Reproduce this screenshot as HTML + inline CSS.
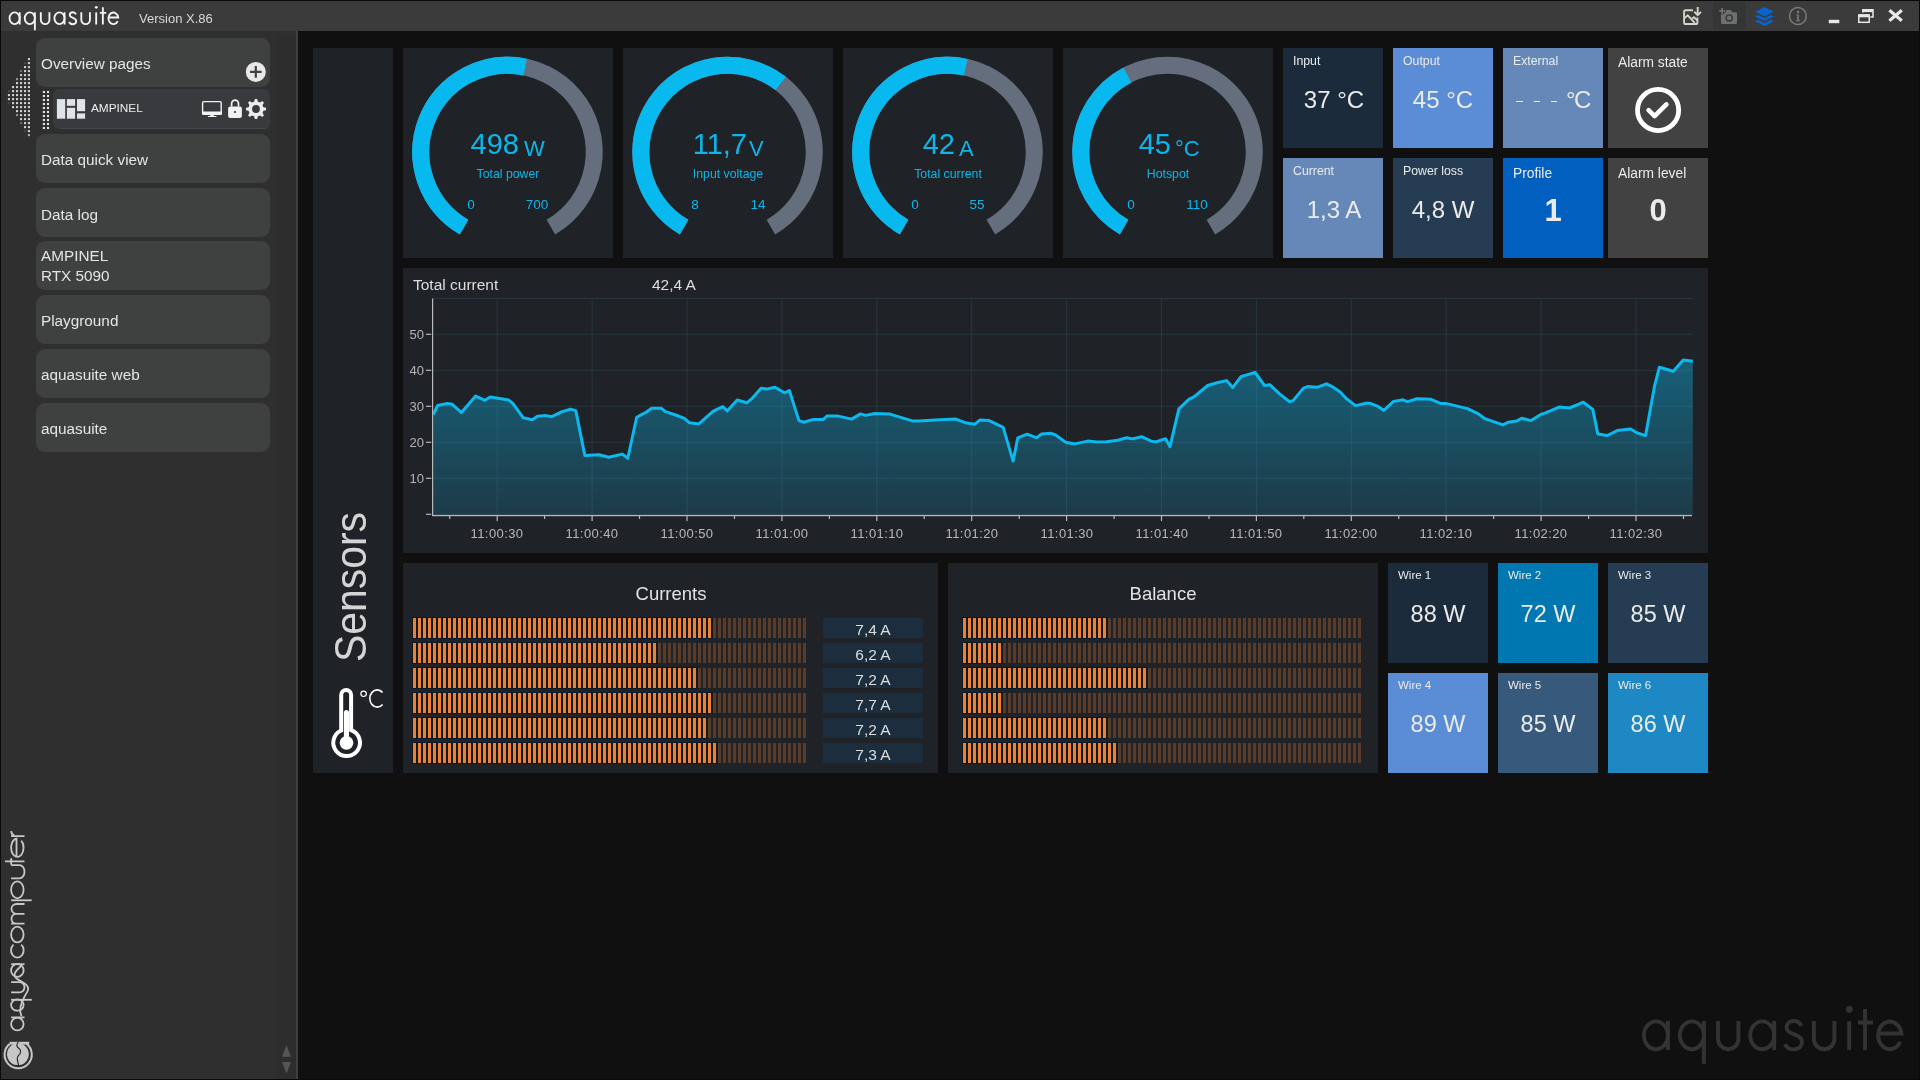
<!DOCTYPE html><html><head><meta charset="utf-8"><style>
*{margin:0;padding:0;box-sizing:border-box}
html,body{width:1920px;height:1080px;overflow:hidden;background:#101010;font-family:"Liberation Sans",sans-serif}
.a{position:absolute}
.t{position:absolute;white-space:nowrap;will-change:transform}
svg{position:absolute;overflow:visible;will-change:transform}
</style></head><body>
<div class="a" style="left:0px;top:0px;width:1920px;height:1080px;background:#0a0a0a;"></div>
<div class="a" style="left:1px;top:1px;width:1918px;height:1078px;background:#101010;"></div>
<div class="a" style="left:1px;top:1px;width:1918px;height:30px;background:#3b3b3b;"></div>
<div class="a" style="left:1px;top:31px;width:295px;height:1048px;background:#2f2f2f;"></div>
<div class="a" style="left:277px;top:35px;width:19px;height:1044px;background:#2d2d2d;"></div>
<div class="a" style="left:296px;top:31px;width:2px;height:1048px;background:#3e3e3e;"></div>
<svg style="left:0;top:0" width="1920" height="1080"><g transform="translate(8.75 24.5) scale(0.422)" fill="none" stroke="#f4f4f4" stroke-width="4.4"><ellipse cx="13.9" cy="-14.7" rx="12" ry="13.9"/><path d="M25.9 -29V0"/><ellipse cx="49.9" cy="-14.7" rx="12" ry="13.9"/><path d="M61.9 -29V13.8"/><path d="M76 -29V-11A10.2 10.2 0 0 0 96.4 -11V-29"/><ellipse cx="120.2" cy="-14.7" rx="12" ry="13.9"/><path d="M132.2 -29V0"/><path transform="translate(100 0)" d="M59.3 -24.2C58 -27.2 55 -29 51.8 -29C47.6 -29 44.6 -26.3 44.6 -22.6C44.6 -19 47.5 -17.6 51 -16.2C55.6 -14.4 59.9 -12.8 59.9 -8C59.9 -3.2 56.3 -0.6 51.8 -0.6C47.6 -0.6 44.6 -2.5 42.8 -5.8"/><path d="M171.9 -29V-11A10.25 10.25 0 0 0 192.4 -11V-29"/><path d="M207.2 -28.7V0"/><circle cx="207.4" cy="-40.6" r="3.3" style="stroke:none" fill="#f4f4f4"/><path d="M223 -40.9V0M216 -27.5H231"/><path d="M236.2 -16.5H259.4A11.65 13.8 0 1 0 258.2 -8.2"/></g></svg>
<div class="t" style="left:139.00px;top:12.00px;font-size:13px;line-height:13px;color:#d8d8d8;">Version X.86</div>
<svg style="left:0;top:0" width="1920" height="32">
<g fill="none" stroke="#d6d3c8" stroke-width="1.9">
<path d="M1693 10.3H1685.6Q1684.1 10.3 1684.1 11.8V22.4Q1684.1 24 1685.6 24H1695.9Q1697.4 24 1697.4 22.4V17.4"/>
<path d="M1684.2 18.4L1687.7 15.4L1694.8 22.8M1692.2 18.6L1694 17.2L1697.6 20.6"/>
<path d="M1697.7 7V14.6M1694.3 11.8L1697.7 15.1L1701 11.8"/>
</g>
<rect x="1713.2" y="1.6" width="32.4" height="28.3" rx="3" fill="#343536"/>
<path fill="#6f6f6b" d="M1721 13.4Q1721 12.2 1722.2 12.2H1725.4L1726.4 10H1731L1732 12.2H1735.8Q1737 12.2 1737 13.4V22.7Q1737 23.9 1735.8 23.9H1722.2Q1721 23.9 1721 22.7Z"/>
<circle cx="1729.2" cy="17.9" r="3.1" fill="none" stroke="#343536" stroke-width="1.3"/>
<path d="M1722.1 7.6V14.2M1718.8 10.9H1725.4" stroke="#343536" stroke-width="3.8"/>
<path d="M1722.1 8V13.8M1719.2 10.9H1725" stroke="#6f6f6b" stroke-width="1.8"/>
<g fill="#0964cc">
<path d="M1764.5 6.9L1773.9 11.7L1764.5 16.5L1755.2 11.7Z"/>
<path d="M1755.2 16.4L1758.1 14.9L1764.5 18.1L1770.9 14.9L1773.9 16.4L1764.5 21.1Z"/>
<path d="M1755.2 21.3L1758.1 19.8L1764.5 23L1770.9 19.8L1773.9 21.3L1764.5 26Z"/>
</g>
<circle cx="1797.9" cy="16" r="8.4" fill="none" stroke="#7a7a7a" stroke-width="1.5"/>
<circle cx="1798.1" cy="12" r="1.2" fill="#7a7a7a"/>
<path d="M1796.4 14.4H1798.9V20.2H1800V21.2H1796V20.2H1797.2V15.4H1796.4Z" fill="#7a7a7a"/>
<rect x="1828.8" y="19.8" width="10.5" height="3.4" fill="#e8e8e8"/>
<g fill="none" stroke="#e8e8e8">
<path d="M1862.8 12.4V9.8H1873V17H1870.4" stroke-width="1.5"/>
<path d="M1862.8 10.6H1873" stroke-width="3"/>
<rect x="1858.8" y="15" width="10.4" height="7.3" stroke-width="1.5"/>
<path d="M1858.8 15.8H1869.2" stroke-width="3"/>
<path d="M1889.4 10.2L1901.8 20.8M1901.8 10.2L1889.4 20.8" stroke-width="3.2"/>
</g>
</svg>
<svg style="left:0;top:0" width="1920" height="1080"><g transform="translate(1642 1050) scale(1.0)" fill="none" stroke="#333333" stroke-width="3.9"><ellipse cx="13.9" cy="-14.7" rx="12" ry="13.9"/><path d="M25.9 -29V0"/><ellipse cx="49.9" cy="-14.7" rx="12" ry="13.9"/><path d="M61.9 -29V13.8"/><path d="M76 -29V-11A10.2 10.2 0 0 0 96.4 -11V-29"/><ellipse cx="120.2" cy="-14.7" rx="12" ry="13.9"/><path d="M132.2 -29V0"/><path transform="translate(100 0)" d="M59.3 -24.2C58 -27.2 55 -29 51.8 -29C47.6 -29 44.6 -26.3 44.6 -22.6C44.6 -19 47.5 -17.6 51 -16.2C55.6 -14.4 59.9 -12.8 59.9 -8C59.9 -3.2 56.3 -0.6 51.8 -0.6C47.6 -0.6 44.6 -2.5 42.8 -5.8"/><path d="M171.9 -29V-11A10.25 10.25 0 0 0 192.4 -11V-29"/><path d="M207.2 -28.7V0"/><circle cx="207.4" cy="-40.6" r="3.3" style="stroke:none" fill="#333333"/><path d="M223 -40.9V0M216 -27.5H231"/><path d="M236.2 -16.5H259.4A11.65 13.8 0 1 0 258.2 -8.2"/></g></svg>
<div class="a" style="left:36px;top:38px;width:234px;height:49px;background:#3f4141;border-radius:9px"></div>
<div class="a" style="left:36px;top:134px;width:234px;height:49px;background:#3f4141;border-radius:9px"></div>
<div class="a" style="left:36px;top:188px;width:234px;height:49px;background:#3f4141;border-radius:9px"></div>
<div class="a" style="left:36px;top:241px;width:234px;height:49px;background:#3f4141;border-radius:9px"></div>
<div class="a" style="left:36px;top:295px;width:234px;height:49px;background:#3f4141;border-radius:9px"></div>
<div class="a" style="left:36px;top:349px;width:234px;height:49px;background:#3f4141;border-radius:9px"></div>
<div class="a" style="left:36px;top:403px;width:234px;height:49px;background:#3f4141;border-radius:9px"></div>
<div class="t" style="left:41.40px;top:55.85px;font-size:15.3px;line-height:15.3px;color:#e4e4e4;">Overview pages</div>
<div class="t" style="left:41.40px;top:152.25px;font-size:15.3px;line-height:15.3px;color:#e4e4e4;">Data quick view</div>
<div class="t" style="left:41.40px;top:206.55px;font-size:15.3px;line-height:15.3px;color:#e4e4e4;">Data log</div>
<div class="t" style="left:41.40px;top:248.15px;font-size:15.3px;line-height:15.3px;color:#e4e4e4;">AMPINEL</div>
<div class="t" style="left:41.40px;top:267.75px;font-size:15.3px;line-height:15.3px;color:#e4e4e4;">RTX 5090</div>
<div class="t" style="left:41.40px;top:312.65px;font-size:15.3px;line-height:15.3px;color:#e4e4e4;">Playground</div>
<div class="t" style="left:41.40px;top:366.65px;font-size:15.3px;line-height:15.3px;color:#e4e4e4;">aquasuite web</div>
<div class="t" style="left:41.40px;top:420.85px;font-size:15.3px;line-height:15.3px;color:#e4e4e4;">aquasuite</div>
<div class="a" style="left:53px;top:89px;width:217px;height:40px;background:#393a3e;border-radius:6px"></div>
<div class="a" style="left:61px;top:128px;width:205px;height:1px;background:#44474d;"></div>
<div class="t" style="left:91.00px;top:103.11px;font-size:11.8px;line-height:11.8px;color:#ececec;">AMPINEL</div>
<svg style="left:0;top:0" width="300" height="1080"><circle cx="255.8" cy="71.9" r="10" fill="#e8e8e8"/><path d="M250 71.9H261.6M255.8 66.1V77.7" stroke="#3f4141" stroke-width="2.2"/><g fill="#e0e3e7"><rect x="56.9" y="99.1" width="8.3" height="19.6"/><rect x="66.9" y="99.1" width="8.2" height="6.7"/><rect x="66.9" y="107.8" width="8.2" height="10.9"/><rect x="77" y="99.1" width="8.1" height="12.1"/><rect x="77" y="113.4" width="8.1" height="5.3"/></g><rect x="202.6" y="101.6" width="18.6" height="12.6" rx="1.2" fill="none" stroke="#f2f2f2" stroke-width="1.4"/><rect x="202" y="111.4" width="20" height="3.4" rx="1" fill="#f2f2f2"/><path d="M210.3 114.6H213.8V116.1H216.4V117.1H207.9V116.1H210.3Z" fill="#f2f2f2"/><path d="M231.6 106.6V103.6A3.45 3.45 0 0 1 238.5 103.6V106.6" fill="none" stroke="#f2f2f2" stroke-width="1.7"/><rect x="228.1" y="106.4" width="13.8" height="11.7" rx="2" fill="#f2f2f2"/><circle cx="235" cy="112" r="1.1" fill="#393a3e"/><polygon points="254.21,101.82 254.77,98.98 257.23,98.98 257.79,101.82 259.81,102.66 262.22,101.04 263.96,102.78 262.34,105.19 263.18,107.21 266.02,107.77 266.02,110.23 263.18,110.79 262.34,112.81 263.96,115.22 262.22,116.96 259.81,115.34 257.79,116.18 257.23,119.02 254.77,119.02 254.21,116.18 252.19,115.34 249.78,116.96 248.04,115.22 249.66,112.81 248.82,110.79 245.98,110.23 245.98,107.77 248.82,107.21 249.66,105.19 248.04,102.78 249.78,101.04 252.19,102.66" fill="#ececec"/><circle cx="256" cy="109" r="7.6" fill="#ececec"/><circle cx="256" cy="109" r="3.9" fill="#393a3e"/><rect x="27.90" y="58.05" width="2.1" height="2.1" fill="#cfcfcf" opacity="1.00"/><rect x="27.90" y="62.05" width="2.1" height="2.1" fill="#cfcfcf" opacity="1.00"/><rect x="27.90" y="66.05" width="2.1" height="2.1" fill="#cfcfcf" opacity="1.00"/><rect x="27.90" y="70.05" width="2.1" height="2.1" fill="#cfcfcf" opacity="1.00"/><rect x="27.90" y="74.05" width="2.1" height="2.1" fill="#cfcfcf" opacity="1.00"/><rect x="27.90" y="78.05" width="2.1" height="2.1" fill="#cfcfcf" opacity="1.00"/><rect x="27.90" y="82.05" width="2.1" height="2.1" fill="#cfcfcf" opacity="1.00"/><rect x="27.90" y="86.05" width="2.1" height="2.1" fill="#cfcfcf" opacity="1.00"/><rect x="27.90" y="90.05" width="2.1" height="2.1" fill="#cfcfcf" opacity="1.00"/><rect x="27.90" y="94.05" width="2.1" height="2.1" fill="#cfcfcf" opacity="1.00"/><rect x="27.90" y="98.05" width="2.1" height="2.1" fill="#cfcfcf" opacity="1.00"/><rect x="27.90" y="102.05" width="2.1" height="2.1" fill="#cfcfcf" opacity="1.00"/><rect x="27.90" y="106.05" width="2.1" height="2.1" fill="#cfcfcf" opacity="1.00"/><rect x="27.90" y="110.05" width="2.1" height="2.1" fill="#cfcfcf" opacity="1.00"/><rect x="27.90" y="114.05" width="2.1" height="2.1" fill="#cfcfcf" opacity="1.00"/><rect x="27.90" y="118.05" width="2.1" height="2.1" fill="#cfcfcf" opacity="1.00"/><rect x="27.90" y="122.05" width="2.1" height="2.1" fill="#cfcfcf" opacity="1.00"/><rect x="27.90" y="126.05" width="2.1" height="2.1" fill="#cfcfcf" opacity="1.00"/><rect x="27.90" y="130.05" width="2.1" height="2.1" fill="#cfcfcf" opacity="1.00"/><rect x="27.90" y="134.05" width="2.1" height="2.1" fill="#cfcfcf" opacity="0.78"/><rect x="24.00" y="62.05" width="2.1" height="2.1" fill="#cfcfcf" opacity="0.17"/><rect x="24.00" y="66.05" width="2.1" height="2.1" fill="#cfcfcf" opacity="1.00"/><rect x="24.00" y="70.05" width="2.1" height="2.1" fill="#cfcfcf" opacity="1.00"/><rect x="24.00" y="74.05" width="2.1" height="2.1" fill="#cfcfcf" opacity="1.00"/><rect x="24.00" y="78.05" width="2.1" height="2.1" fill="#cfcfcf" opacity="1.00"/><rect x="24.00" y="82.05" width="2.1" height="2.1" fill="#cfcfcf" opacity="1.00"/><rect x="24.00" y="86.05" width="2.1" height="2.1" fill="#cfcfcf" opacity="1.00"/><rect x="24.00" y="90.05" width="2.1" height="2.1" fill="#cfcfcf" opacity="1.00"/><rect x="24.00" y="94.05" width="2.1" height="2.1" fill="#cfcfcf" opacity="1.00"/><rect x="24.00" y="98.05" width="2.1" height="2.1" fill="#cfcfcf" opacity="1.00"/><rect x="24.00" y="102.05" width="2.1" height="2.1" fill="#cfcfcf" opacity="1.00"/><rect x="24.00" y="106.05" width="2.1" height="2.1" fill="#cfcfcf" opacity="1.00"/><rect x="24.00" y="110.05" width="2.1" height="2.1" fill="#cfcfcf" opacity="1.00"/><rect x="24.00" y="114.05" width="2.1" height="2.1" fill="#cfcfcf" opacity="1.00"/><rect x="24.00" y="118.05" width="2.1" height="2.1" fill="#cfcfcf" opacity="1.00"/><rect x="24.00" y="122.05" width="2.1" height="2.1" fill="#cfcfcf" opacity="1.00"/><rect x="24.00" y="126.05" width="2.1" height="2.1" fill="#cfcfcf" opacity="1.00"/><rect x="24.00" y="130.05" width="2.1" height="2.1" fill="#cfcfcf" opacity="0.14"/><rect x="20.00" y="70.05" width="2.1" height="2.1" fill="#cfcfcf" opacity="0.40"/><rect x="20.00" y="74.05" width="2.1" height="2.1" fill="#cfcfcf" opacity="1.00"/><rect x="20.00" y="78.05" width="2.1" height="2.1" fill="#cfcfcf" opacity="1.00"/><rect x="20.00" y="82.05" width="2.1" height="2.1" fill="#cfcfcf" opacity="1.00"/><rect x="20.00" y="86.05" width="2.1" height="2.1" fill="#cfcfcf" opacity="1.00"/><rect x="20.00" y="90.05" width="2.1" height="2.1" fill="#cfcfcf" opacity="1.00"/><rect x="20.00" y="94.05" width="2.1" height="2.1" fill="#cfcfcf" opacity="1.00"/><rect x="20.00" y="98.05" width="2.1" height="2.1" fill="#cfcfcf" opacity="1.00"/><rect x="20.00" y="102.05" width="2.1" height="2.1" fill="#cfcfcf" opacity="1.00"/><rect x="20.00" y="106.05" width="2.1" height="2.1" fill="#cfcfcf" opacity="1.00"/><rect x="20.00" y="110.05" width="2.1" height="2.1" fill="#cfcfcf" opacity="1.00"/><rect x="20.00" y="114.05" width="2.1" height="2.1" fill="#cfcfcf" opacity="1.00"/><rect x="20.00" y="118.05" width="2.1" height="2.1" fill="#cfcfcf" opacity="1.00"/><rect x="20.00" y="122.05" width="2.1" height="2.1" fill="#cfcfcf" opacity="0.38"/><rect x="16.00" y="78.05" width="2.1" height="2.1" fill="#cfcfcf" opacity="0.64"/><rect x="16.00" y="82.05" width="2.1" height="2.1" fill="#cfcfcf" opacity="1.00"/><rect x="16.00" y="86.05" width="2.1" height="2.1" fill="#cfcfcf" opacity="1.00"/><rect x="16.00" y="90.05" width="2.1" height="2.1" fill="#cfcfcf" opacity="1.00"/><rect x="16.00" y="94.05" width="2.1" height="2.1" fill="#cfcfcf" opacity="1.00"/><rect x="16.00" y="98.05" width="2.1" height="2.1" fill="#cfcfcf" opacity="1.00"/><rect x="16.00" y="102.05" width="2.1" height="2.1" fill="#cfcfcf" opacity="1.00"/><rect x="16.00" y="106.05" width="2.1" height="2.1" fill="#cfcfcf" opacity="1.00"/><rect x="16.00" y="110.05" width="2.1" height="2.1" fill="#cfcfcf" opacity="1.00"/><rect x="16.00" y="114.05" width="2.1" height="2.1" fill="#cfcfcf" opacity="0.62"/><rect x="12.00" y="86.05" width="2.1" height="2.1" fill="#cfcfcf" opacity="1.00"/><rect x="12.00" y="90.05" width="2.1" height="2.1" fill="#cfcfcf" opacity="1.00"/><rect x="12.00" y="94.05" width="2.1" height="2.1" fill="#cfcfcf" opacity="1.00"/><rect x="12.00" y="98.05" width="2.1" height="2.1" fill="#cfcfcf" opacity="1.00"/><rect x="12.00" y="102.05" width="2.1" height="2.1" fill="#cfcfcf" opacity="1.00"/><rect x="12.00" y="106.05" width="2.1" height="2.1" fill="#cfcfcf" opacity="1.00"/><rect x="7.90" y="90.05" width="2.1" height="2.1" fill="#cfcfcf" opacity="0.17"/><rect x="7.90" y="94.05" width="2.1" height="2.1" fill="#cfcfcf" opacity="1.00"/><rect x="7.90" y="98.05" width="2.1" height="2.1" fill="#cfcfcf" opacity="1.00"/><rect x="7.90" y="102.05" width="2.1" height="2.1" fill="#cfcfcf" opacity="0.14"/><rect x="42.85" y="90.95" width="2.1" height="2.1" fill="#e6e6e6"/><rect x="46.95" y="90.95" width="2.1" height="2.1" fill="#e6e6e6"/><rect x="42.85" y="94.95" width="2.1" height="2.1" fill="#e6e6e6"/><rect x="46.95" y="94.95" width="2.1" height="2.1" fill="#e6e6e6"/><rect x="42.85" y="98.95" width="2.1" height="2.1" fill="#e6e6e6"/><rect x="46.95" y="98.95" width="2.1" height="2.1" fill="#e6e6e6"/><rect x="42.85" y="102.95" width="2.1" height="2.1" fill="#e6e6e6"/><rect x="46.95" y="102.95" width="2.1" height="2.1" fill="#e6e6e6"/><rect x="42.85" y="106.95" width="2.1" height="2.1" fill="#e6e6e6"/><rect x="46.95" y="106.95" width="2.1" height="2.1" fill="#e6e6e6"/><rect x="42.85" y="110.95" width="2.1" height="2.1" fill="#e6e6e6"/><rect x="46.95" y="110.95" width="2.1" height="2.1" fill="#e6e6e6"/><rect x="42.85" y="114.95" width="2.1" height="2.1" fill="#e6e6e6"/><rect x="46.95" y="114.95" width="2.1" height="2.1" fill="#e6e6e6"/><rect x="42.85" y="118.95" width="2.1" height="2.1" fill="#e6e6e6"/><rect x="46.95" y="118.95" width="2.1" height="2.1" fill="#e6e6e6"/><rect x="42.85" y="122.95" width="2.1" height="2.1" fill="#e6e6e6"/><rect x="46.95" y="122.95" width="2.1" height="2.1" fill="#e6e6e6"/><rect x="42.85" y="126.95" width="2.1" height="2.1" fill="#e6e6e6"/><rect x="46.95" y="126.95" width="2.1" height="2.1" fill="#e6e6e6"/><path d="M286.5 1045L291 1056.7H282Z M282 1061.9H291L286.5 1073.5Z" fill="#555555"/><g><path d="M26.57 1043.88A13.6 13.6 0 1 1 9.83 1043.88" fill="none" stroke="#c6c6c6" stroke-width="2"/><circle cx="17.9" cy="1054.2" r="10.9" fill="#c6c6c6"/><rect x="9.7" y="1041.8" width="19.5" height="2.8" fill="#c6c6c6"/><path d="M18.6 1041.5C16 1045 16.5 1046.5 19 1048.5C21.5 1050.5 21 1053.5 18.5 1055.5C16 1057.5 17.5 1061.5 18.8 1066" fill="none" stroke="#2f2f2f" stroke-width="1.2"/></g></svg>
<svg style="left:0;top:0" width="300" height="1080"><g transform="translate(24.5 1031.2) rotate(-90)" fill="none" stroke="#c8c8c8" stroke-width="1.8"><ellipse cx="7.15" cy="-7.15" rx="6.35" ry="6.25"/><path d="M13.8 -13.4V0"/><ellipse cx="26.15" cy="-7.15" rx="5.65" ry="6.25"/><path d="M31.4 -13.4V7.3"/><path d="M38.8 -13.4V-5A5.1 5 0 0 0 49 -5V-13.4"/><ellipse cx="60.8" cy="-7.15" rx="6.5" ry="6.25"/><path d="M67 -13.4V0"/><path d="M86.5 -11A7.2 6.3 0 1 0 86.5 -3.3"/><ellipse cx="96.65" cy="-7.15" rx="7.85" ry="6.25"/><path d="M107.6 0V-13.4M107.6 -8A4.9 5 0 0 1 117.4 -8V0M117.4 -8A4.9 5 0 0 1 127.2 -8V0"/><ellipse cx="141.4" cy="-7.15" rx="8.5" ry="6.25"/><path d="M130.9 -13.4V7.2"/><path d="M152.9 -13.4V-5A6.6 5 0 0 0 166.1 -5V-13.4"/><path d="M169.8 -19.5V0M166.5 -13.3H173"/><path d="M174.3 -8H192.6A9.15 6.25 0 1 0 190.6 -3.2"/><path d="M195.1 0V-13.4M195.1 -10A6 6 0 0 1 200 -13.4"/><path d="M15 -3C22 -6 28 -3 33.5 -0.5S42 6 46 2C50 -2 52 -10 56 -10S62 -6 66 -3"/></g></svg>
<div class="a" style="left:313px;top:48px;width:80px;height:725px;background:#1f2327;"></div>
<div class="a" style="left:403px;top:48px;width:210px;height:210px;background:#1f2327;"></div>
<div class="a" style="left:623px;top:48px;width:210px;height:210px;background:#1f2327;"></div>
<div class="a" style="left:843px;top:48px;width:210px;height:210px;background:#1f2327;"></div>
<div class="a" style="left:1063px;top:48px;width:210px;height:210px;background:#1f2327;"></div>
<div class="a" style="left:403px;top:268px;width:1305px;height:285px;background:#1f2327;"></div>
<div class="a" style="left:403px;top:563px;width:535px;height:210px;background:#1f2327;"></div>
<div class="a" style="left:948px;top:563px;width:430px;height:210px;background:#1f2327;"></div>
<svg style="left:0;top:0" width="1920" height="300"><path d="M464.12 227.13A86.75 86.75 0 1 1 550.88 227.13" fill="none" stroke="#646e7d" stroke-width="17"/><path d="M464.12 227.13A86.75 86.75 0 0 1 525.24 67.08" fill="none" stroke="#08b9ef" stroke-width="17"/><path d="M684.12 227.13A86.75 86.75 0 1 1 770.88 227.13" fill="none" stroke="#646e7d" stroke-width="17"/><path d="M684.12 227.13A86.75 86.75 0 1 1 780.67 83.45" fill="none" stroke="#08b9ef" stroke-width="17"/><path d="M904.12 227.13A86.75 86.75 0 1 1 990.88 227.13" fill="none" stroke="#646e7d" stroke-width="17"/><path d="M904.12 227.13A86.75 86.75 0 0 1 965.83 67.21" fill="none" stroke="#08b9ef" stroke-width="17"/><path d="M1124.12 227.13A86.75 86.75 0 1 1 1210.88 227.13" fill="none" stroke="#646e7d" stroke-width="17"/><path d="M1124.12 227.13A86.75 86.75 0 0 1 1127.44 75.05" fill="none" stroke="#08b9ef" stroke-width="17"/></svg>
<div class="t" style="left:398.60px;width:120px;text-align:right;top:130.45px;font-size:29px;line-height:29px;color:#0cb6ea;">498</div>
<div class="t" style="left:523.70px;top:138.38px;font-size:22px;line-height:22px;color:#0cb6ea;">W</div>
<div class="t" style="left:428.20px;width:160px;text-align:center;top:167.59px;font-size:12.3px;line-height:12.3px;color:#0cb6ea;">Total power</div>
<div class="t" style="left:440.50px;width:60px;text-align:center;top:197.57px;font-size:13.5px;line-height:13.5px;color:#0cb6ea;">0</div>
<div class="t" style="left:507.00px;width:60px;text-align:center;top:197.57px;font-size:13.5px;line-height:13.5px;color:#0cb6ea;">700</div>
<div class="t" style="left:626.60px;width:120px;text-align:right;top:130.45px;font-size:29px;line-height:29px;color:#0cb6ea;">11,7</div>
<div class="t" style="left:748.80px;top:138.38px;font-size:22px;line-height:22px;color:#0cb6ea;">V</div>
<div class="t" style="left:648.20px;width:160px;text-align:center;top:167.59px;font-size:12.3px;line-height:12.3px;color:#0cb6ea;">Input voltage</div>
<div class="t" style="left:664.50px;width:60px;text-align:center;top:197.57px;font-size:13.5px;line-height:13.5px;color:#0cb6ea;">8</div>
<div class="t" style="left:727.50px;width:60px;text-align:center;top:197.57px;font-size:13.5px;line-height:13.5px;color:#0cb6ea;">14</div>
<div class="t" style="left:835.40px;width:120px;text-align:right;top:130.45px;font-size:29px;line-height:29px;color:#0cb6ea;">42</div>
<div class="t" style="left:958.80px;top:138.38px;font-size:22px;line-height:22px;color:#0cb6ea;">A</div>
<div class="t" style="left:868.20px;width:160px;text-align:center;top:167.59px;font-size:12.3px;line-height:12.3px;color:#0cb6ea;">Total current</div>
<div class="t" style="left:884.50px;width:60px;text-align:center;top:197.57px;font-size:13.5px;line-height:13.5px;color:#0cb6ea;">0</div>
<div class="t" style="left:946.50px;width:60px;text-align:center;top:197.57px;font-size:13.5px;line-height:13.5px;color:#0cb6ea;">55</div>
<div class="t" style="left:1051.20px;width:120px;text-align:right;top:130.45px;font-size:29px;line-height:29px;color:#0cb6ea;">45</div>
<div class="t" style="left:1174.80px;top:138.38px;font-size:22px;line-height:22px;color:#0cb6ea;">°C</div>
<div class="t" style="left:1088.20px;width:160px;text-align:center;top:167.59px;font-size:12.3px;line-height:12.3px;color:#0cb6ea;">Hotspot</div>
<div class="t" style="left:1100.50px;width:60px;text-align:center;top:197.57px;font-size:13.5px;line-height:13.5px;color:#0cb6ea;">0</div>
<div class="t" style="left:1167.00px;width:60px;text-align:center;top:197.57px;font-size:13.5px;line-height:13.5px;color:#0cb6ea;">110</div>
<div class="a" style="left:1283px;top:48px;width:100px;height:100px;background:#1c2b3c;"></div>
<div class="a" style="left:1393px;top:48px;width:100px;height:100px;background:#5b8cd6;"></div>
<div class="a" style="left:1503px;top:48px;width:100px;height:100px;background:#6688b8;"></div>
<div class="a" style="left:1608px;top:48px;width:100px;height:100px;background:#424242;"></div>
<div class="a" style="left:1283px;top:158px;width:100px;height:100px;background:#6688b8;"></div>
<div class="a" style="left:1393px;top:158px;width:100px;height:100px;background:#253c52;"></div>
<div class="a" style="left:1503px;top:158px;width:100px;height:100px;background:#005fbf;"></div>
<div class="a" style="left:1608px;top:158px;width:100px;height:100px;background:#424242;"></div>
<div class="t" style="left:1293.00px;top:54.89px;font-size:12.3px;line-height:12.3px;color:#ebebeb;">Input</div>
<div class="t" style="left:1403.00px;top:54.89px;font-size:12.3px;line-height:12.3px;color:#ebebeb;">Output</div>
<div class="t" style="left:1513.00px;top:54.89px;font-size:12.3px;line-height:12.3px;color:#ebebeb;">External</div>
<div class="t" style="left:1618.00px;top:56.42px;font-size:13.8px;line-height:13.8px;color:#ebebeb;">Alarm state</div>
<div class="t" style="left:1293.00px;top:164.59px;font-size:12.3px;line-height:12.3px;color:#ebebeb;">Current</div>
<div class="t" style="left:1403.00px;top:164.59px;font-size:12.3px;line-height:12.3px;color:#ebebeb;">Power loss</div>
<div class="t" style="left:1513.00px;top:166.62px;font-size:13.8px;line-height:13.8px;color:#ebebeb;">Profile</div>
<div class="t" style="left:1618.00px;top:166.62px;font-size:13.8px;line-height:13.8px;color:#ebebeb;">Alarm level</div>
<div class="t" style="left:1283.50px;width:100px;text-align:center;top:87.68px;font-size:24px;line-height:24px;color:#ebebeb;">37 °C</div>
<div class="t" style="left:1392.80px;width:100px;text-align:center;top:87.68px;font-size:24px;line-height:24px;color:#ebebeb;">45 °C</div>
<div class="a" style="left:1516.4px;top:100.7px;width:6.7px;height:1.6px;background:#ebebeb;"></div>
<div class="a" style="left:1533.5px;top:100.7px;width:6.7px;height:1.6px;background:#ebebeb;"></div>
<div class="a" style="left:1550.5px;top:100.7px;width:6.7px;height:1.6px;background:#ebebeb;"></div>
<div class="t" style="left:1565.80px;top:87.68px;font-size:24px;line-height:24px;color:#ebebeb;letter-spacing:-1.5px">°C</div>
<div class="t" style="left:1284.25px;width:100px;text-align:center;top:197.68px;font-size:24px;line-height:24px;color:#ebebeb;">1,3 A</div>
<div class="t" style="left:1392.90px;width:100px;text-align:center;top:197.68px;font-size:24px;line-height:24px;color:#ebebeb;">4,8 W</div>
<div class="t" style="left:1503.20px;width:100px;text-align:center;top:195.36px;font-size:31px;line-height:31px;color:#ebebeb;font-weight:bold">1</div>
<div class="t" style="left:1607.90px;width:100px;text-align:center;top:195.36px;font-size:31px;line-height:31px;color:#ebebeb;font-weight:bold">0</div>
<svg style="left:0;top:0" width="1920" height="300"><circle cx="1658.1" cy="110" r="20.6" fill="none" stroke="#ffffff" stroke-width="4.8"/><path d="M1648.6 110.2L1654.6 116.1L1666.4 104.4" fill="none" stroke="#ffffff" stroke-width="4.6" stroke-linecap="round" stroke-linejoin="round"/></svg>
<div class="a" style="left:1388px;top:563px;width:100px;height:100px;background:#1c2b3c;"></div>
<div class="t" style="left:1398.00px;top:570.37px;font-size:11.5px;line-height:11.5px;color:#ebebeb;">Wire 1</div>
<div class="t" style="left:1387.80px;width:100px;text-align:center;top:603.21px;font-size:23.5px;line-height:23.5px;color:#ebebeb;">88 W</div>
<div class="a" style="left:1498px;top:563px;width:100px;height:100px;background:#0077b0;"></div>
<div class="t" style="left:1508.00px;top:570.37px;font-size:11.5px;line-height:11.5px;color:#ebebeb;">Wire 2</div>
<div class="t" style="left:1497.80px;width:100px;text-align:center;top:603.21px;font-size:23.5px;line-height:23.5px;color:#ebebeb;">72 W</div>
<div class="a" style="left:1608px;top:563px;width:100px;height:100px;background:#253c52;"></div>
<div class="t" style="left:1618.00px;top:570.37px;font-size:11.5px;line-height:11.5px;color:#ebebeb;">Wire 3</div>
<div class="t" style="left:1607.80px;width:100px;text-align:center;top:603.21px;font-size:23.5px;line-height:23.5px;color:#ebebeb;">85 W</div>
<div class="a" style="left:1388px;top:673px;width:100px;height:100px;background:#5b8cd6;"></div>
<div class="t" style="left:1398.00px;top:680.37px;font-size:11.5px;line-height:11.5px;color:#ebebeb;">Wire 4</div>
<div class="t" style="left:1387.80px;width:100px;text-align:center;top:713.21px;font-size:23.5px;line-height:23.5px;color:#ebebeb;">89 W</div>
<div class="a" style="left:1498px;top:673px;width:100px;height:100px;background:#375a7c;"></div>
<div class="t" style="left:1508.00px;top:680.37px;font-size:11.5px;line-height:11.5px;color:#ebebeb;">Wire 5</div>
<div class="t" style="left:1497.80px;width:100px;text-align:center;top:713.21px;font-size:23.5px;line-height:23.5px;color:#ebebeb;">85 W</div>
<div class="a" style="left:1608px;top:673px;width:100px;height:100px;background:#1e88c4;"></div>
<div class="t" style="left:1618.00px;top:680.37px;font-size:11.5px;line-height:11.5px;color:#ebebeb;">Wire 6</div>
<div class="t" style="left:1607.80px;width:100px;text-align:center;top:713.21px;font-size:23.5px;line-height:23.5px;color:#ebebeb;">86 W</div>
<svg style="left:0;top:0" width="400" height="800"><text transform="translate(366.3 662) rotate(-90)" font-family="Liberation Sans" font-size="44" fill="#d4d4d4" textLength="150" lengthAdjust="spacingAndGlyphs">Sensors</text><path d="M341.2 730.46V694.9A4.95 4.95 0 0 1 351.1 694.9V730.06A13.35 13.35 0 1 1 341.2 730.46Z" fill="none" stroke="#ffffff" stroke-width="4"/><rect x="343.9" y="709.9" width="5.1" height="30" rx="2.55" fill="#ffffff"/><circle cx="346.5" cy="742.8" r="6.85" fill="#ffffff"/><circle cx="363.6" cy="693.8" r="2.7" fill="none" stroke="#ffffff" stroke-width="1.2"/><path d="M382.6 692.6A7.4 8.6 0 1 0 382.6 704.4" fill="none" stroke="#ffffff" stroke-width="1.6"/></svg>
<svg style="left:0;top:0" width="1920" height="600"><defs><linearGradient id="fg" gradientUnits="userSpaceOnUse" x1="0" y1="360" x2="0" y2="515"><stop offset="0" stop-color="#176079"/><stop offset="1" stop-color="#1d3b48"/></linearGradient></defs><polygon points="433,515 433.2,414.5 437.7,405.5 447.4,403.5 452.0,404.2 461.4,412.6 475.7,396.1 485.0,400.3 490.2,397.0 498.0,398.3 508.4,399.9 512.9,403.5 523.3,417.8 532.3,419.7 537.5,416.2 546.0,415.6 551.8,416.7 561.5,411.9 570.6,409.3 575.8,410.6 584.8,455.4 599.1,454.7 608.8,457.3 622.4,454.1 627.8,458.3 636.7,417.2 646.1,412.2 651.7,408.3 661.1,408.3 665.6,411.7 675.6,415.0 684.4,418.3 689.4,422.8 698.9,423.9 713.3,411.1 722.8,406.7 727.2,410.9 737.2,400.0 746.7,402.8 752.2,398.3 761.1,388.3 766.7,389.1 775.0,387.2 784.4,392.8 789.4,390.6 798.9,420.6 803.9,422.2 813.3,419.4 823.0,419.6 827.2,415.9 837.1,415.9 851.7,419.1 860.5,413.9 865.7,415.4 875.1,413.5 889.2,413.9 913.1,421.1 919.4,421.1 935.0,420.1 955.8,419.1 965.2,422.7 974.6,424.3 979.8,420.1 989.2,420.6 1003.2,427.4 1013.1,461.1 1017.8,437.8 1027.2,434.2 1036.7,437.8 1041.7,433.9 1051.1,433.3 1055.6,435.0 1065.6,442.2 1075.0,443.9 1087.8,441.1 1096.7,442.0 1106.7,441.7 1117.8,440.2 1126.7,437.8 1132.2,438.9 1141.7,436.7 1151.1,441.1 1155.6,442.0 1165.6,438.7 1170.0,446.7 1178.9,408.9 1188.9,399.4 1193.9,396.9 1207.7,385.5 1217.1,382.7 1226.5,380.6 1232.7,387.6 1241.0,376.7 1244.2,375.6 1255.1,372.5 1264.5,385.5 1269.7,384.7 1279.6,393.9 1289.5,401.7 1293.1,400.6 1303.5,388.1 1307.7,386.6 1317.1,387.3 1326.5,383.8 1332.2,386.6 1340.5,392.3 1346.2,398.5 1355.6,405.6 1366.0,403.2 1369.7,403.2 1378.5,406.7 1383.9,410.4 1393.5,401.4 1402.9,399.8 1407.6,401.6 1417.0,398.8 1431.0,399.3 1440.4,403.4 1445.6,403.4 1467.5,408.6 1478.4,413.9 1484.2,418.3 1502.9,424.8 1508.6,422.2 1516.5,421.1 1521.7,418.3 1531.0,420.6 1540.9,414.4 1545.6,412.8 1559.7,406.9 1569.4,408.0 1578.3,404.4 1583.3,402.2 1592.8,409.4 1597.8,433.9 1607.2,435.6 1617.2,430.6 1630.6,428.9 1636.7,432.8 1645.6,435.6 1654.4,386.7 1659.4,367.2 1673.3,371.3 1683.3,360.0 1692.8,361.3 1692.8,515" fill="url(#fg)"/><rect x="433" y="477.8" width="1260" height="1" fill="rgba(100,170,210,0.14)"/><rect x="433" y="441.8" width="1260" height="1" fill="rgba(100,170,210,0.14)"/><rect x="433" y="405.8" width="1260" height="1" fill="rgba(100,170,210,0.14)"/><rect x="433" y="369.8" width="1260" height="1" fill="rgba(100,170,210,0.14)"/><rect x="433" y="333.8" width="1260" height="1" fill="rgba(100,170,210,0.14)"/><rect x="433" y="298" width="1260" height="1" fill="rgba(100,170,210,0.14)"/><rect x="496.7" y="299" width="1" height="215.5" fill="rgba(100,170,210,0.14)"/><rect x="591.6" y="299" width="1" height="215.5" fill="rgba(100,170,210,0.14)"/><rect x="686.5" y="299" width="1" height="215.5" fill="rgba(100,170,210,0.14)"/><rect x="781.4" y="299" width="1" height="215.5" fill="rgba(100,170,210,0.14)"/><rect x="876.3" y="299" width="1" height="215.5" fill="rgba(100,170,210,0.14)"/><rect x="971.2" y="299" width="1" height="215.5" fill="rgba(100,170,210,0.14)"/><rect x="1066.1" y="299" width="1" height="215.5" fill="rgba(100,170,210,0.14)"/><rect x="1161.0" y="299" width="1" height="215.5" fill="rgba(100,170,210,0.14)"/><rect x="1255.9" y="299" width="1" height="215.5" fill="rgba(100,170,210,0.14)"/><rect x="1350.8" y="299" width="1" height="215.5" fill="rgba(100,170,210,0.14)"/><rect x="1445.7" y="299" width="1" height="215.5" fill="rgba(100,170,210,0.14)"/><rect x="1540.6" y="299" width="1" height="215.5" fill="rgba(100,170,210,0.14)"/><rect x="1635.5" y="299" width="1" height="215.5" fill="rgba(100,170,210,0.14)"/><polyline points="433.2,414.5 437.7,405.5 447.4,403.5 452.0,404.2 461.4,412.6 475.7,396.1 485.0,400.3 490.2,397.0 498.0,398.3 508.4,399.9 512.9,403.5 523.3,417.8 532.3,419.7 537.5,416.2 546.0,415.6 551.8,416.7 561.5,411.9 570.6,409.3 575.8,410.6 584.8,455.4 599.1,454.7 608.8,457.3 622.4,454.1 627.8,458.3 636.7,417.2 646.1,412.2 651.7,408.3 661.1,408.3 665.6,411.7 675.6,415.0 684.4,418.3 689.4,422.8 698.9,423.9 713.3,411.1 722.8,406.7 727.2,410.9 737.2,400.0 746.7,402.8 752.2,398.3 761.1,388.3 766.7,389.1 775.0,387.2 784.4,392.8 789.4,390.6 798.9,420.6 803.9,422.2 813.3,419.4 823.0,419.6 827.2,415.9 837.1,415.9 851.7,419.1 860.5,413.9 865.7,415.4 875.1,413.5 889.2,413.9 913.1,421.1 919.4,421.1 935.0,420.1 955.8,419.1 965.2,422.7 974.6,424.3 979.8,420.1 989.2,420.6 1003.2,427.4 1013.1,461.1 1017.8,437.8 1027.2,434.2 1036.7,437.8 1041.7,433.9 1051.1,433.3 1055.6,435.0 1065.6,442.2 1075.0,443.9 1087.8,441.1 1096.7,442.0 1106.7,441.7 1117.8,440.2 1126.7,437.8 1132.2,438.9 1141.7,436.7 1151.1,441.1 1155.6,442.0 1165.6,438.7 1170.0,446.7 1178.9,408.9 1188.9,399.4 1193.9,396.9 1207.7,385.5 1217.1,382.7 1226.5,380.6 1232.7,387.6 1241.0,376.7 1244.2,375.6 1255.1,372.5 1264.5,385.5 1269.7,384.7 1279.6,393.9 1289.5,401.7 1293.1,400.6 1303.5,388.1 1307.7,386.6 1317.1,387.3 1326.5,383.8 1332.2,386.6 1340.5,392.3 1346.2,398.5 1355.6,405.6 1366.0,403.2 1369.7,403.2 1378.5,406.7 1383.9,410.4 1393.5,401.4 1402.9,399.8 1407.6,401.6 1417.0,398.8 1431.0,399.3 1440.4,403.4 1445.6,403.4 1467.5,408.6 1478.4,413.9 1484.2,418.3 1502.9,424.8 1508.6,422.2 1516.5,421.1 1521.7,418.3 1531.0,420.6 1540.9,414.4 1545.6,412.8 1559.7,406.9 1569.4,408.0 1578.3,404.4 1583.3,402.2 1592.8,409.4 1597.8,433.9 1607.2,435.6 1617.2,430.6 1630.6,428.9 1636.7,432.8 1645.6,435.6 1654.4,386.7 1659.4,367.2 1673.3,371.3 1683.3,360.0 1692.8,361.3" fill="none" stroke="#0bb9ef" stroke-width="3" stroke-linejoin="round"/><rect x="432" y="298.5" width="1.2" height="217" fill="#b9b9b9"/><rect x="432" y="514.9" width="1260" height="1.3" fill="#b9b9b9"/><rect x="426" y="513.7" width="5.2" height="1.2" fill="#b9b9b9"/><rect x="426" y="477.7" width="5.2" height="1.2" fill="#b9b9b9"/><rect x="426" y="441.7" width="5.2" height="1.2" fill="#b9b9b9"/><rect x="426" y="405.7" width="5.2" height="1.2" fill="#b9b9b9"/><rect x="426" y="369.7" width="5.2" height="1.2" fill="#b9b9b9"/><rect x="426" y="333.7" width="5.2" height="1.2" fill="#b9b9b9"/><rect x="496.6" y="516" width="1.2" height="5" fill="#b9b9b9"/><rect x="591.5" y="516" width="1.2" height="5" fill="#b9b9b9"/><rect x="686.4" y="516" width="1.2" height="5" fill="#b9b9b9"/><rect x="781.3" y="516" width="1.2" height="5" fill="#b9b9b9"/><rect x="876.2" y="516" width="1.2" height="5" fill="#b9b9b9"/><rect x="971.1" y="516" width="1.2" height="5" fill="#b9b9b9"/><rect x="1066.0" y="516" width="1.2" height="5" fill="#b9b9b9"/><rect x="1160.9" y="516" width="1.2" height="5" fill="#b9b9b9"/><rect x="1255.8" y="516" width="1.2" height="5" fill="#b9b9b9"/><rect x="1350.7" y="516" width="1.2" height="5" fill="#b9b9b9"/><rect x="1445.6" y="516" width="1.2" height="5" fill="#b9b9b9"/><rect x="1540.5" y="516" width="1.2" height="5" fill="#b9b9b9"/><rect x="1635.4" y="516" width="1.2" height="5" fill="#b9b9b9"/><rect x="449.1" y="516" width="1.2" height="3" fill="#b9b9b9"/><rect x="544.0" y="516" width="1.2" height="3" fill="#b9b9b9"/><rect x="638.9" y="516" width="1.2" height="3" fill="#b9b9b9"/><rect x="733.9" y="516" width="1.2" height="3" fill="#b9b9b9"/><rect x="828.8" y="516" width="1.2" height="3" fill="#b9b9b9"/><rect x="923.6" y="516" width="1.2" height="3" fill="#b9b9b9"/><rect x="1018.6" y="516" width="1.2" height="3" fill="#b9b9b9"/><rect x="1113.5" y="516" width="1.2" height="3" fill="#b9b9b9"/><rect x="1208.4" y="516" width="1.2" height="3" fill="#b9b9b9"/><rect x="1303.2" y="516" width="1.2" height="3" fill="#b9b9b9"/><rect x="1398.2" y="516" width="1.2" height="3" fill="#b9b9b9"/><rect x="1493.1" y="516" width="1.2" height="3" fill="#b9b9b9"/><rect x="1588.0" y="516" width="1.2" height="3" fill="#b9b9b9"/><rect x="1682.9" y="516" width="1.2" height="3" fill="#b9b9b9"/></svg>
<div class="t" style="left:413.40px;top:277.38px;font-size:15.5px;line-height:15.5px;color:#dedede;">Total current</div>
<div class="t" style="left:652.30px;top:277.38px;font-size:15.5px;line-height:15.5px;color:#dedede;">42,4 A</div>
<div class="t" style="left:384.30px;width:40px;text-align:right;top:471.50px;font-size:13px;line-height:13px;color:#b4b4b4;">10</div>
<div class="t" style="left:384.30px;width:40px;text-align:right;top:435.50px;font-size:13px;line-height:13px;color:#b4b4b4;">20</div>
<div class="t" style="left:384.30px;width:40px;text-align:right;top:399.50px;font-size:13px;line-height:13px;color:#b4b4b4;">30</div>
<div class="t" style="left:384.30px;width:40px;text-align:right;top:363.50px;font-size:13px;line-height:13px;color:#b4b4b4;">40</div>
<div class="t" style="left:384.30px;width:40px;text-align:right;top:327.50px;font-size:13px;line-height:13px;color:#b4b4b4;">50</div>
<div class="t" style="left:457.20px;width:80px;text-align:center;top:526.80px;font-size:13px;line-height:13px;color:#b8b8b8;letter-spacing:0.4px">11:00:30</div>
<div class="t" style="left:552.10px;width:80px;text-align:center;top:526.80px;font-size:13px;line-height:13px;color:#b8b8b8;letter-spacing:0.4px">11:00:40</div>
<div class="t" style="left:647.00px;width:80px;text-align:center;top:526.80px;font-size:13px;line-height:13px;color:#b8b8b8;letter-spacing:0.4px">11:00:50</div>
<div class="t" style="left:741.90px;width:80px;text-align:center;top:526.80px;font-size:13px;line-height:13px;color:#b8b8b8;letter-spacing:0.4px">11:01:00</div>
<div class="t" style="left:836.80px;width:80px;text-align:center;top:526.80px;font-size:13px;line-height:13px;color:#b8b8b8;letter-spacing:0.4px">11:01:10</div>
<div class="t" style="left:931.70px;width:80px;text-align:center;top:526.80px;font-size:13px;line-height:13px;color:#b8b8b8;letter-spacing:0.4px">11:01:20</div>
<div class="t" style="left:1026.60px;width:80px;text-align:center;top:526.80px;font-size:13px;line-height:13px;color:#b8b8b8;letter-spacing:0.4px">11:01:30</div>
<div class="t" style="left:1121.50px;width:80px;text-align:center;top:526.80px;font-size:13px;line-height:13px;color:#b8b8b8;letter-spacing:0.4px">11:01:40</div>
<div class="t" style="left:1216.40px;width:80px;text-align:center;top:526.80px;font-size:13px;line-height:13px;color:#b8b8b8;letter-spacing:0.4px">11:01:50</div>
<div class="t" style="left:1311.30px;width:80px;text-align:center;top:526.80px;font-size:13px;line-height:13px;color:#b8b8b8;letter-spacing:0.4px">11:02:00</div>
<div class="t" style="left:1406.20px;width:80px;text-align:center;top:526.80px;font-size:13px;line-height:13px;color:#b8b8b8;letter-spacing:0.4px">11:02:10</div>
<div class="t" style="left:1501.10px;width:80px;text-align:center;top:526.80px;font-size:13px;line-height:13px;color:#b8b8b8;letter-spacing:0.4px">11:02:20</div>
<div class="t" style="left:1596.00px;width:80px;text-align:center;top:526.80px;font-size:13px;line-height:13px;color:#b8b8b8;letter-spacing:0.4px">11:02:30</div>
<svg style="left:0;top:0" width="1920" height="800"><rect x="412" y="617" width="301" height="22" fill="#0c1a26"/><rect x="413" y="618" width="3" height="20" fill="#ee8034"/><rect x="418" y="618" width="3" height="20" fill="#ee8034"/><rect x="423" y="618" width="3" height="20" fill="#ee8034"/><rect x="428" y="618" width="3" height="20" fill="#ee8034"/><rect x="433" y="618" width="3" height="20" fill="#ee8034"/><rect x="438" y="618" width="3" height="20" fill="#ee8034"/><rect x="443" y="618" width="3" height="20" fill="#ee8034"/><rect x="448" y="618" width="3" height="20" fill="#ee8034"/><rect x="453" y="618" width="3" height="20" fill="#ee8034"/><rect x="458" y="618" width="3" height="20" fill="#ee8034"/><rect x="463" y="618" width="3" height="20" fill="#ee8034"/><rect x="468" y="618" width="3" height="20" fill="#ee8034"/><rect x="473" y="618" width="3" height="20" fill="#ee8034"/><rect x="478" y="618" width="3" height="20" fill="#ee8034"/><rect x="483" y="618" width="3" height="20" fill="#ee8034"/><rect x="488" y="618" width="3" height="20" fill="#ee8034"/><rect x="493" y="618" width="3" height="20" fill="#ee8034"/><rect x="498" y="618" width="3" height="20" fill="#ee8034"/><rect x="503" y="618" width="3" height="20" fill="#ee8034"/><rect x="508" y="618" width="3" height="20" fill="#ee8034"/><rect x="513" y="618" width="3" height="20" fill="#ee8034"/><rect x="518" y="618" width="3" height="20" fill="#ee8034"/><rect x="523" y="618" width="3" height="20" fill="#ee8034"/><rect x="528" y="618" width="3" height="20" fill="#ee8034"/><rect x="533" y="618" width="3" height="20" fill="#ee8034"/><rect x="538" y="618" width="3" height="20" fill="#ee8034"/><rect x="543" y="618" width="3" height="20" fill="#ee8034"/><rect x="548" y="618" width="3" height="20" fill="#ee8034"/><rect x="553" y="618" width="3" height="20" fill="#ee8034"/><rect x="558" y="618" width="3" height="20" fill="#ee8034"/><rect x="563" y="618" width="3" height="20" fill="#ee8034"/><rect x="568" y="618" width="3" height="20" fill="#ee8034"/><rect x="573" y="618" width="3" height="20" fill="#ee8034"/><rect x="578" y="618" width="3" height="20" fill="#ee8034"/><rect x="583" y="618" width="3" height="20" fill="#ee8034"/><rect x="588" y="618" width="3" height="20" fill="#ee8034"/><rect x="593" y="618" width="3" height="20" fill="#ee8034"/><rect x="598" y="618" width="3" height="20" fill="#ee8034"/><rect x="603" y="618" width="3" height="20" fill="#ee8034"/><rect x="608" y="618" width="3" height="20" fill="#ee8034"/><rect x="613" y="618" width="3" height="20" fill="#ee8034"/><rect x="618" y="618" width="3" height="20" fill="#ee8034"/><rect x="623" y="618" width="3" height="20" fill="#ee8034"/><rect x="628" y="618" width="3" height="20" fill="#ee8034"/><rect x="633" y="618" width="3" height="20" fill="#ee8034"/><rect x="638" y="618" width="3" height="20" fill="#ee8034"/><rect x="643" y="618" width="3" height="20" fill="#ee8034"/><rect x="648" y="618" width="3" height="20" fill="#ee8034"/><rect x="653" y="618" width="3" height="20" fill="#ee8034"/><rect x="658" y="618" width="3" height="20" fill="#ee8034"/><rect x="663" y="618" width="3" height="20" fill="#ee8034"/><rect x="668" y="618" width="3" height="20" fill="#ee8034"/><rect x="673" y="618" width="3" height="20" fill="#ee8034"/><rect x="678" y="618" width="3" height="20" fill="#ee8034"/><rect x="683" y="618" width="3" height="20" fill="#ee8034"/><rect x="688" y="618" width="3" height="20" fill="#ee8034"/><rect x="693" y="618" width="3" height="20" fill="#ee8034"/><rect x="698" y="618" width="3" height="20" fill="#ee8034"/><rect x="703" y="618" width="3" height="20" fill="#ee8034"/><rect x="708" y="618" width="3" height="20" fill="#ee8034"/><rect x="713" y="618" width="3" height="20" fill="#583b29"/><rect x="718" y="618" width="3" height="20" fill="#583b29"/><rect x="723" y="618" width="3" height="20" fill="#583b29"/><rect x="728" y="618" width="3" height="20" fill="#583b29"/><rect x="733" y="618" width="3" height="20" fill="#583b29"/><rect x="738" y="618" width="3" height="20" fill="#583b29"/><rect x="743" y="618" width="3" height="20" fill="#583b29"/><rect x="748" y="618" width="3" height="20" fill="#583b29"/><rect x="753" y="618" width="3" height="20" fill="#583b29"/><rect x="758" y="618" width="3" height="20" fill="#583b29"/><rect x="763" y="618" width="3" height="20" fill="#583b29"/><rect x="768" y="618" width="3" height="20" fill="#583b29"/><rect x="773" y="618" width="3" height="20" fill="#583b29"/><rect x="778" y="618" width="3" height="20" fill="#583b29"/><rect x="783" y="618" width="3" height="20" fill="#583b29"/><rect x="788" y="618" width="3" height="20" fill="#583b29"/><rect x="793" y="618" width="3" height="20" fill="#583b29"/><rect x="798" y="618" width="3" height="20" fill="#583b29"/><rect x="803" y="618" width="3" height="20" fill="#583b29"/><rect x="412" y="642" width="246" height="22" fill="#0c1a26"/><rect x="413" y="643" width="3" height="20" fill="#ee8034"/><rect x="418" y="643" width="3" height="20" fill="#ee8034"/><rect x="423" y="643" width="3" height="20" fill="#ee8034"/><rect x="428" y="643" width="3" height="20" fill="#ee8034"/><rect x="433" y="643" width="3" height="20" fill="#ee8034"/><rect x="438" y="643" width="3" height="20" fill="#ee8034"/><rect x="443" y="643" width="3" height="20" fill="#ee8034"/><rect x="448" y="643" width="3" height="20" fill="#ee8034"/><rect x="453" y="643" width="3" height="20" fill="#ee8034"/><rect x="458" y="643" width="3" height="20" fill="#ee8034"/><rect x="463" y="643" width="3" height="20" fill="#ee8034"/><rect x="468" y="643" width="3" height="20" fill="#ee8034"/><rect x="473" y="643" width="3" height="20" fill="#ee8034"/><rect x="478" y="643" width="3" height="20" fill="#ee8034"/><rect x="483" y="643" width="3" height="20" fill="#ee8034"/><rect x="488" y="643" width="3" height="20" fill="#ee8034"/><rect x="493" y="643" width="3" height="20" fill="#ee8034"/><rect x="498" y="643" width="3" height="20" fill="#ee8034"/><rect x="503" y="643" width="3" height="20" fill="#ee8034"/><rect x="508" y="643" width="3" height="20" fill="#ee8034"/><rect x="513" y="643" width="3" height="20" fill="#ee8034"/><rect x="518" y="643" width="3" height="20" fill="#ee8034"/><rect x="523" y="643" width="3" height="20" fill="#ee8034"/><rect x="528" y="643" width="3" height="20" fill="#ee8034"/><rect x="533" y="643" width="3" height="20" fill="#ee8034"/><rect x="538" y="643" width="3" height="20" fill="#ee8034"/><rect x="543" y="643" width="3" height="20" fill="#ee8034"/><rect x="548" y="643" width="3" height="20" fill="#ee8034"/><rect x="553" y="643" width="3" height="20" fill="#ee8034"/><rect x="558" y="643" width="3" height="20" fill="#ee8034"/><rect x="563" y="643" width="3" height="20" fill="#ee8034"/><rect x="568" y="643" width="3" height="20" fill="#ee8034"/><rect x="573" y="643" width="3" height="20" fill="#ee8034"/><rect x="578" y="643" width="3" height="20" fill="#ee8034"/><rect x="583" y="643" width="3" height="20" fill="#ee8034"/><rect x="588" y="643" width="3" height="20" fill="#ee8034"/><rect x="593" y="643" width="3" height="20" fill="#ee8034"/><rect x="598" y="643" width="3" height="20" fill="#ee8034"/><rect x="603" y="643" width="3" height="20" fill="#ee8034"/><rect x="608" y="643" width="3" height="20" fill="#ee8034"/><rect x="613" y="643" width="3" height="20" fill="#ee8034"/><rect x="618" y="643" width="3" height="20" fill="#ee8034"/><rect x="623" y="643" width="3" height="20" fill="#ee8034"/><rect x="628" y="643" width="3" height="20" fill="#ee8034"/><rect x="633" y="643" width="3" height="20" fill="#ee8034"/><rect x="638" y="643" width="3" height="20" fill="#ee8034"/><rect x="643" y="643" width="3" height="20" fill="#ee8034"/><rect x="648" y="643" width="3" height="20" fill="#ee8034"/><rect x="653" y="643" width="3" height="20" fill="#ee8034"/><rect x="658" y="643" width="3" height="20" fill="#583b29"/><rect x="663" y="643" width="3" height="20" fill="#583b29"/><rect x="668" y="643" width="3" height="20" fill="#583b29"/><rect x="673" y="643" width="3" height="20" fill="#583b29"/><rect x="678" y="643" width="3" height="20" fill="#583b29"/><rect x="683" y="643" width="3" height="20" fill="#583b29"/><rect x="688" y="643" width="3" height="20" fill="#583b29"/><rect x="693" y="643" width="3" height="20" fill="#583b29"/><rect x="698" y="643" width="3" height="20" fill="#583b29"/><rect x="703" y="643" width="3" height="20" fill="#583b29"/><rect x="708" y="643" width="3" height="20" fill="#583b29"/><rect x="713" y="643" width="3" height="20" fill="#583b29"/><rect x="718" y="643" width="3" height="20" fill="#583b29"/><rect x="723" y="643" width="3" height="20" fill="#583b29"/><rect x="728" y="643" width="3" height="20" fill="#583b29"/><rect x="733" y="643" width="3" height="20" fill="#583b29"/><rect x="738" y="643" width="3" height="20" fill="#583b29"/><rect x="743" y="643" width="3" height="20" fill="#583b29"/><rect x="748" y="643" width="3" height="20" fill="#583b29"/><rect x="753" y="643" width="3" height="20" fill="#583b29"/><rect x="758" y="643" width="3" height="20" fill="#583b29"/><rect x="763" y="643" width="3" height="20" fill="#583b29"/><rect x="768" y="643" width="3" height="20" fill="#583b29"/><rect x="773" y="643" width="3" height="20" fill="#583b29"/><rect x="778" y="643" width="3" height="20" fill="#583b29"/><rect x="783" y="643" width="3" height="20" fill="#583b29"/><rect x="788" y="643" width="3" height="20" fill="#583b29"/><rect x="793" y="643" width="3" height="20" fill="#583b29"/><rect x="798" y="643" width="3" height="20" fill="#583b29"/><rect x="803" y="643" width="3" height="20" fill="#583b29"/><rect x="412" y="667" width="286" height="22" fill="#0c1a26"/><rect x="413" y="668" width="3" height="20" fill="#ee8034"/><rect x="418" y="668" width="3" height="20" fill="#ee8034"/><rect x="423" y="668" width="3" height="20" fill="#ee8034"/><rect x="428" y="668" width="3" height="20" fill="#ee8034"/><rect x="433" y="668" width="3" height="20" fill="#ee8034"/><rect x="438" y="668" width="3" height="20" fill="#ee8034"/><rect x="443" y="668" width="3" height="20" fill="#ee8034"/><rect x="448" y="668" width="3" height="20" fill="#ee8034"/><rect x="453" y="668" width="3" height="20" fill="#ee8034"/><rect x="458" y="668" width="3" height="20" fill="#ee8034"/><rect x="463" y="668" width="3" height="20" fill="#ee8034"/><rect x="468" y="668" width="3" height="20" fill="#ee8034"/><rect x="473" y="668" width="3" height="20" fill="#ee8034"/><rect x="478" y="668" width="3" height="20" fill="#ee8034"/><rect x="483" y="668" width="3" height="20" fill="#ee8034"/><rect x="488" y="668" width="3" height="20" fill="#ee8034"/><rect x="493" y="668" width="3" height="20" fill="#ee8034"/><rect x="498" y="668" width="3" height="20" fill="#ee8034"/><rect x="503" y="668" width="3" height="20" fill="#ee8034"/><rect x="508" y="668" width="3" height="20" fill="#ee8034"/><rect x="513" y="668" width="3" height="20" fill="#ee8034"/><rect x="518" y="668" width="3" height="20" fill="#ee8034"/><rect x="523" y="668" width="3" height="20" fill="#ee8034"/><rect x="528" y="668" width="3" height="20" fill="#ee8034"/><rect x="533" y="668" width="3" height="20" fill="#ee8034"/><rect x="538" y="668" width="3" height="20" fill="#ee8034"/><rect x="543" y="668" width="3" height="20" fill="#ee8034"/><rect x="548" y="668" width="3" height="20" fill="#ee8034"/><rect x="553" y="668" width="3" height="20" fill="#ee8034"/><rect x="558" y="668" width="3" height="20" fill="#ee8034"/><rect x="563" y="668" width="3" height="20" fill="#ee8034"/><rect x="568" y="668" width="3" height="20" fill="#ee8034"/><rect x="573" y="668" width="3" height="20" fill="#ee8034"/><rect x="578" y="668" width="3" height="20" fill="#ee8034"/><rect x="583" y="668" width="3" height="20" fill="#ee8034"/><rect x="588" y="668" width="3" height="20" fill="#ee8034"/><rect x="593" y="668" width="3" height="20" fill="#ee8034"/><rect x="598" y="668" width="3" height="20" fill="#ee8034"/><rect x="603" y="668" width="3" height="20" fill="#ee8034"/><rect x="608" y="668" width="3" height="20" fill="#ee8034"/><rect x="613" y="668" width="3" height="20" fill="#ee8034"/><rect x="618" y="668" width="3" height="20" fill="#ee8034"/><rect x="623" y="668" width="3" height="20" fill="#ee8034"/><rect x="628" y="668" width="3" height="20" fill="#ee8034"/><rect x="633" y="668" width="3" height="20" fill="#ee8034"/><rect x="638" y="668" width="3" height="20" fill="#ee8034"/><rect x="643" y="668" width="3" height="20" fill="#ee8034"/><rect x="648" y="668" width="3" height="20" fill="#ee8034"/><rect x="653" y="668" width="3" height="20" fill="#ee8034"/><rect x="658" y="668" width="3" height="20" fill="#ee8034"/><rect x="663" y="668" width="3" height="20" fill="#ee8034"/><rect x="668" y="668" width="3" height="20" fill="#ee8034"/><rect x="673" y="668" width="3" height="20" fill="#ee8034"/><rect x="678" y="668" width="3" height="20" fill="#ee8034"/><rect x="683" y="668" width="3" height="20" fill="#ee8034"/><rect x="688" y="668" width="3" height="20" fill="#ee8034"/><rect x="693" y="668" width="3" height="20" fill="#ee8034"/><rect x="698" y="668" width="3" height="20" fill="#583b29"/><rect x="703" y="668" width="3" height="20" fill="#583b29"/><rect x="708" y="668" width="3" height="20" fill="#583b29"/><rect x="713" y="668" width="3" height="20" fill="#583b29"/><rect x="718" y="668" width="3" height="20" fill="#583b29"/><rect x="723" y="668" width="3" height="20" fill="#583b29"/><rect x="728" y="668" width="3" height="20" fill="#583b29"/><rect x="733" y="668" width="3" height="20" fill="#583b29"/><rect x="738" y="668" width="3" height="20" fill="#583b29"/><rect x="743" y="668" width="3" height="20" fill="#583b29"/><rect x="748" y="668" width="3" height="20" fill="#583b29"/><rect x="753" y="668" width="3" height="20" fill="#583b29"/><rect x="758" y="668" width="3" height="20" fill="#583b29"/><rect x="763" y="668" width="3" height="20" fill="#583b29"/><rect x="768" y="668" width="3" height="20" fill="#583b29"/><rect x="773" y="668" width="3" height="20" fill="#583b29"/><rect x="778" y="668" width="3" height="20" fill="#583b29"/><rect x="783" y="668" width="3" height="20" fill="#583b29"/><rect x="788" y="668" width="3" height="20" fill="#583b29"/><rect x="793" y="668" width="3" height="20" fill="#583b29"/><rect x="798" y="668" width="3" height="20" fill="#583b29"/><rect x="803" y="668" width="3" height="20" fill="#583b29"/><rect x="412" y="692" width="301" height="22" fill="#0c1a26"/><rect x="413" y="693" width="3" height="20" fill="#ee8034"/><rect x="418" y="693" width="3" height="20" fill="#ee8034"/><rect x="423" y="693" width="3" height="20" fill="#ee8034"/><rect x="428" y="693" width="3" height="20" fill="#ee8034"/><rect x="433" y="693" width="3" height="20" fill="#ee8034"/><rect x="438" y="693" width="3" height="20" fill="#ee8034"/><rect x="443" y="693" width="3" height="20" fill="#ee8034"/><rect x="448" y="693" width="3" height="20" fill="#ee8034"/><rect x="453" y="693" width="3" height="20" fill="#ee8034"/><rect x="458" y="693" width="3" height="20" fill="#ee8034"/><rect x="463" y="693" width="3" height="20" fill="#ee8034"/><rect x="468" y="693" width="3" height="20" fill="#ee8034"/><rect x="473" y="693" width="3" height="20" fill="#ee8034"/><rect x="478" y="693" width="3" height="20" fill="#ee8034"/><rect x="483" y="693" width="3" height="20" fill="#ee8034"/><rect x="488" y="693" width="3" height="20" fill="#ee8034"/><rect x="493" y="693" width="3" height="20" fill="#ee8034"/><rect x="498" y="693" width="3" height="20" fill="#ee8034"/><rect x="503" y="693" width="3" height="20" fill="#ee8034"/><rect x="508" y="693" width="3" height="20" fill="#ee8034"/><rect x="513" y="693" width="3" height="20" fill="#ee8034"/><rect x="518" y="693" width="3" height="20" fill="#ee8034"/><rect x="523" y="693" width="3" height="20" fill="#ee8034"/><rect x="528" y="693" width="3" height="20" fill="#ee8034"/><rect x="533" y="693" width="3" height="20" fill="#ee8034"/><rect x="538" y="693" width="3" height="20" fill="#ee8034"/><rect x="543" y="693" width="3" height="20" fill="#ee8034"/><rect x="548" y="693" width="3" height="20" fill="#ee8034"/><rect x="553" y="693" width="3" height="20" fill="#ee8034"/><rect x="558" y="693" width="3" height="20" fill="#ee8034"/><rect x="563" y="693" width="3" height="20" fill="#ee8034"/><rect x="568" y="693" width="3" height="20" fill="#ee8034"/><rect x="573" y="693" width="3" height="20" fill="#ee8034"/><rect x="578" y="693" width="3" height="20" fill="#ee8034"/><rect x="583" y="693" width="3" height="20" fill="#ee8034"/><rect x="588" y="693" width="3" height="20" fill="#ee8034"/><rect x="593" y="693" width="3" height="20" fill="#ee8034"/><rect x="598" y="693" width="3" height="20" fill="#ee8034"/><rect x="603" y="693" width="3" height="20" fill="#ee8034"/><rect x="608" y="693" width="3" height="20" fill="#ee8034"/><rect x="613" y="693" width="3" height="20" fill="#ee8034"/><rect x="618" y="693" width="3" height="20" fill="#ee8034"/><rect x="623" y="693" width="3" height="20" fill="#ee8034"/><rect x="628" y="693" width="3" height="20" fill="#ee8034"/><rect x="633" y="693" width="3" height="20" fill="#ee8034"/><rect x="638" y="693" width="3" height="20" fill="#ee8034"/><rect x="643" y="693" width="3" height="20" fill="#ee8034"/><rect x="648" y="693" width="3" height="20" fill="#ee8034"/><rect x="653" y="693" width="3" height="20" fill="#ee8034"/><rect x="658" y="693" width="3" height="20" fill="#ee8034"/><rect x="663" y="693" width="3" height="20" fill="#ee8034"/><rect x="668" y="693" width="3" height="20" fill="#ee8034"/><rect x="673" y="693" width="3" height="20" fill="#ee8034"/><rect x="678" y="693" width="3" height="20" fill="#ee8034"/><rect x="683" y="693" width="3" height="20" fill="#ee8034"/><rect x="688" y="693" width="3" height="20" fill="#ee8034"/><rect x="693" y="693" width="3" height="20" fill="#ee8034"/><rect x="698" y="693" width="3" height="20" fill="#ee8034"/><rect x="703" y="693" width="3" height="20" fill="#ee8034"/><rect x="708" y="693" width="3" height="20" fill="#ee8034"/><rect x="713" y="693" width="3" height="20" fill="#583b29"/><rect x="718" y="693" width="3" height="20" fill="#583b29"/><rect x="723" y="693" width="3" height="20" fill="#583b29"/><rect x="728" y="693" width="3" height="20" fill="#583b29"/><rect x="733" y="693" width="3" height="20" fill="#583b29"/><rect x="738" y="693" width="3" height="20" fill="#583b29"/><rect x="743" y="693" width="3" height="20" fill="#583b29"/><rect x="748" y="693" width="3" height="20" fill="#583b29"/><rect x="753" y="693" width="3" height="20" fill="#583b29"/><rect x="758" y="693" width="3" height="20" fill="#583b29"/><rect x="763" y="693" width="3" height="20" fill="#583b29"/><rect x="768" y="693" width="3" height="20" fill="#583b29"/><rect x="773" y="693" width="3" height="20" fill="#583b29"/><rect x="778" y="693" width="3" height="20" fill="#583b29"/><rect x="783" y="693" width="3" height="20" fill="#583b29"/><rect x="788" y="693" width="3" height="20" fill="#583b29"/><rect x="793" y="693" width="3" height="20" fill="#583b29"/><rect x="798" y="693" width="3" height="20" fill="#583b29"/><rect x="803" y="693" width="3" height="20" fill="#583b29"/><rect x="412" y="717" width="296" height="22" fill="#0c1a26"/><rect x="413" y="718" width="3" height="20" fill="#ee8034"/><rect x="418" y="718" width="3" height="20" fill="#ee8034"/><rect x="423" y="718" width="3" height="20" fill="#ee8034"/><rect x="428" y="718" width="3" height="20" fill="#ee8034"/><rect x="433" y="718" width="3" height="20" fill="#ee8034"/><rect x="438" y="718" width="3" height="20" fill="#ee8034"/><rect x="443" y="718" width="3" height="20" fill="#ee8034"/><rect x="448" y="718" width="3" height="20" fill="#ee8034"/><rect x="453" y="718" width="3" height="20" fill="#ee8034"/><rect x="458" y="718" width="3" height="20" fill="#ee8034"/><rect x="463" y="718" width="3" height="20" fill="#ee8034"/><rect x="468" y="718" width="3" height="20" fill="#ee8034"/><rect x="473" y="718" width="3" height="20" fill="#ee8034"/><rect x="478" y="718" width="3" height="20" fill="#ee8034"/><rect x="483" y="718" width="3" height="20" fill="#ee8034"/><rect x="488" y="718" width="3" height="20" fill="#ee8034"/><rect x="493" y="718" width="3" height="20" fill="#ee8034"/><rect x="498" y="718" width="3" height="20" fill="#ee8034"/><rect x="503" y="718" width="3" height="20" fill="#ee8034"/><rect x="508" y="718" width="3" height="20" fill="#ee8034"/><rect x="513" y="718" width="3" height="20" fill="#ee8034"/><rect x="518" y="718" width="3" height="20" fill="#ee8034"/><rect x="523" y="718" width="3" height="20" fill="#ee8034"/><rect x="528" y="718" width="3" height="20" fill="#ee8034"/><rect x="533" y="718" width="3" height="20" fill="#ee8034"/><rect x="538" y="718" width="3" height="20" fill="#ee8034"/><rect x="543" y="718" width="3" height="20" fill="#ee8034"/><rect x="548" y="718" width="3" height="20" fill="#ee8034"/><rect x="553" y="718" width="3" height="20" fill="#ee8034"/><rect x="558" y="718" width="3" height="20" fill="#ee8034"/><rect x="563" y="718" width="3" height="20" fill="#ee8034"/><rect x="568" y="718" width="3" height="20" fill="#ee8034"/><rect x="573" y="718" width="3" height="20" fill="#ee8034"/><rect x="578" y="718" width="3" height="20" fill="#ee8034"/><rect x="583" y="718" width="3" height="20" fill="#ee8034"/><rect x="588" y="718" width="3" height="20" fill="#ee8034"/><rect x="593" y="718" width="3" height="20" fill="#ee8034"/><rect x="598" y="718" width="3" height="20" fill="#ee8034"/><rect x="603" y="718" width="3" height="20" fill="#ee8034"/><rect x="608" y="718" width="3" height="20" fill="#ee8034"/><rect x="613" y="718" width="3" height="20" fill="#ee8034"/><rect x="618" y="718" width="3" height="20" fill="#ee8034"/><rect x="623" y="718" width="3" height="20" fill="#ee8034"/><rect x="628" y="718" width="3" height="20" fill="#ee8034"/><rect x="633" y="718" width="3" height="20" fill="#ee8034"/><rect x="638" y="718" width="3" height="20" fill="#ee8034"/><rect x="643" y="718" width="3" height="20" fill="#ee8034"/><rect x="648" y="718" width="3" height="20" fill="#ee8034"/><rect x="653" y="718" width="3" height="20" fill="#ee8034"/><rect x="658" y="718" width="3" height="20" fill="#ee8034"/><rect x="663" y="718" width="3" height="20" fill="#ee8034"/><rect x="668" y="718" width="3" height="20" fill="#ee8034"/><rect x="673" y="718" width="3" height="20" fill="#ee8034"/><rect x="678" y="718" width="3" height="20" fill="#ee8034"/><rect x="683" y="718" width="3" height="20" fill="#ee8034"/><rect x="688" y="718" width="3" height="20" fill="#ee8034"/><rect x="693" y="718" width="3" height="20" fill="#ee8034"/><rect x="698" y="718" width="3" height="20" fill="#ee8034"/><rect x="703" y="718" width="3" height="20" fill="#ee8034"/><rect x="708" y="718" width="3" height="20" fill="#583b29"/><rect x="713" y="718" width="3" height="20" fill="#583b29"/><rect x="718" y="718" width="3" height="20" fill="#583b29"/><rect x="723" y="718" width="3" height="20" fill="#583b29"/><rect x="728" y="718" width="3" height="20" fill="#583b29"/><rect x="733" y="718" width="3" height="20" fill="#583b29"/><rect x="738" y="718" width="3" height="20" fill="#583b29"/><rect x="743" y="718" width="3" height="20" fill="#583b29"/><rect x="748" y="718" width="3" height="20" fill="#583b29"/><rect x="753" y="718" width="3" height="20" fill="#583b29"/><rect x="758" y="718" width="3" height="20" fill="#583b29"/><rect x="763" y="718" width="3" height="20" fill="#583b29"/><rect x="768" y="718" width="3" height="20" fill="#583b29"/><rect x="773" y="718" width="3" height="20" fill="#583b29"/><rect x="778" y="718" width="3" height="20" fill="#583b29"/><rect x="783" y="718" width="3" height="20" fill="#583b29"/><rect x="788" y="718" width="3" height="20" fill="#583b29"/><rect x="793" y="718" width="3" height="20" fill="#583b29"/><rect x="798" y="718" width="3" height="20" fill="#583b29"/><rect x="803" y="718" width="3" height="20" fill="#583b29"/><rect x="412" y="742" width="306" height="22" fill="#0c1a26"/><rect x="413" y="743" width="3" height="20" fill="#ee8034"/><rect x="418" y="743" width="3" height="20" fill="#ee8034"/><rect x="423" y="743" width="3" height="20" fill="#ee8034"/><rect x="428" y="743" width="3" height="20" fill="#ee8034"/><rect x="433" y="743" width="3" height="20" fill="#ee8034"/><rect x="438" y="743" width="3" height="20" fill="#ee8034"/><rect x="443" y="743" width="3" height="20" fill="#ee8034"/><rect x="448" y="743" width="3" height="20" fill="#ee8034"/><rect x="453" y="743" width="3" height="20" fill="#ee8034"/><rect x="458" y="743" width="3" height="20" fill="#ee8034"/><rect x="463" y="743" width="3" height="20" fill="#ee8034"/><rect x="468" y="743" width="3" height="20" fill="#ee8034"/><rect x="473" y="743" width="3" height="20" fill="#ee8034"/><rect x="478" y="743" width="3" height="20" fill="#ee8034"/><rect x="483" y="743" width="3" height="20" fill="#ee8034"/><rect x="488" y="743" width="3" height="20" fill="#ee8034"/><rect x="493" y="743" width="3" height="20" fill="#ee8034"/><rect x="498" y="743" width="3" height="20" fill="#ee8034"/><rect x="503" y="743" width="3" height="20" fill="#ee8034"/><rect x="508" y="743" width="3" height="20" fill="#ee8034"/><rect x="513" y="743" width="3" height="20" fill="#ee8034"/><rect x="518" y="743" width="3" height="20" fill="#ee8034"/><rect x="523" y="743" width="3" height="20" fill="#ee8034"/><rect x="528" y="743" width="3" height="20" fill="#ee8034"/><rect x="533" y="743" width="3" height="20" fill="#ee8034"/><rect x="538" y="743" width="3" height="20" fill="#ee8034"/><rect x="543" y="743" width="3" height="20" fill="#ee8034"/><rect x="548" y="743" width="3" height="20" fill="#ee8034"/><rect x="553" y="743" width="3" height="20" fill="#ee8034"/><rect x="558" y="743" width="3" height="20" fill="#ee8034"/><rect x="563" y="743" width="3" height="20" fill="#ee8034"/><rect x="568" y="743" width="3" height="20" fill="#ee8034"/><rect x="573" y="743" width="3" height="20" fill="#ee8034"/><rect x="578" y="743" width="3" height="20" fill="#ee8034"/><rect x="583" y="743" width="3" height="20" fill="#ee8034"/><rect x="588" y="743" width="3" height="20" fill="#ee8034"/><rect x="593" y="743" width="3" height="20" fill="#ee8034"/><rect x="598" y="743" width="3" height="20" fill="#ee8034"/><rect x="603" y="743" width="3" height="20" fill="#ee8034"/><rect x="608" y="743" width="3" height="20" fill="#ee8034"/><rect x="613" y="743" width="3" height="20" fill="#ee8034"/><rect x="618" y="743" width="3" height="20" fill="#ee8034"/><rect x="623" y="743" width="3" height="20" fill="#ee8034"/><rect x="628" y="743" width="3" height="20" fill="#ee8034"/><rect x="633" y="743" width="3" height="20" fill="#ee8034"/><rect x="638" y="743" width="3" height="20" fill="#ee8034"/><rect x="643" y="743" width="3" height="20" fill="#ee8034"/><rect x="648" y="743" width="3" height="20" fill="#ee8034"/><rect x="653" y="743" width="3" height="20" fill="#ee8034"/><rect x="658" y="743" width="3" height="20" fill="#ee8034"/><rect x="663" y="743" width="3" height="20" fill="#ee8034"/><rect x="668" y="743" width="3" height="20" fill="#ee8034"/><rect x="673" y="743" width="3" height="20" fill="#ee8034"/><rect x="678" y="743" width="3" height="20" fill="#ee8034"/><rect x="683" y="743" width="3" height="20" fill="#ee8034"/><rect x="688" y="743" width="3" height="20" fill="#ee8034"/><rect x="693" y="743" width="3" height="20" fill="#ee8034"/><rect x="698" y="743" width="3" height="20" fill="#ee8034"/><rect x="703" y="743" width="3" height="20" fill="#ee8034"/><rect x="708" y="743" width="3" height="20" fill="#ee8034"/><rect x="713" y="743" width="3" height="20" fill="#ee8034"/><rect x="718" y="743" width="3" height="20" fill="#583b29"/><rect x="723" y="743" width="3" height="20" fill="#583b29"/><rect x="728" y="743" width="3" height="20" fill="#583b29"/><rect x="733" y="743" width="3" height="20" fill="#583b29"/><rect x="738" y="743" width="3" height="20" fill="#583b29"/><rect x="743" y="743" width="3" height="20" fill="#583b29"/><rect x="748" y="743" width="3" height="20" fill="#583b29"/><rect x="753" y="743" width="3" height="20" fill="#583b29"/><rect x="758" y="743" width="3" height="20" fill="#583b29"/><rect x="763" y="743" width="3" height="20" fill="#583b29"/><rect x="768" y="743" width="3" height="20" fill="#583b29"/><rect x="773" y="743" width="3" height="20" fill="#583b29"/><rect x="778" y="743" width="3" height="20" fill="#583b29"/><rect x="783" y="743" width="3" height="20" fill="#583b29"/><rect x="788" y="743" width="3" height="20" fill="#583b29"/><rect x="793" y="743" width="3" height="20" fill="#583b29"/><rect x="798" y="743" width="3" height="20" fill="#583b29"/><rect x="803" y="743" width="3" height="20" fill="#583b29"/></svg>
<div class="t" style="left:570.50px;width:200px;text-align:center;top:585.34px;font-size:18.5px;line-height:18.5px;color:#e2e2e2;">Currents</div>
<svg style="left:0;top:0" width="1920" height="800"><rect x="962" y="617" width="146" height="22" fill="#0c1a26"/><rect x="963" y="618" width="3" height="20" fill="#ee8034"/><rect x="968" y="618" width="3" height="20" fill="#ee8034"/><rect x="973" y="618" width="3" height="20" fill="#ee8034"/><rect x="978" y="618" width="3" height="20" fill="#ee8034"/><rect x="983" y="618" width="3" height="20" fill="#ee8034"/><rect x="988" y="618" width="3" height="20" fill="#ee8034"/><rect x="993" y="618" width="3" height="20" fill="#ee8034"/><rect x="998" y="618" width="3" height="20" fill="#ee8034"/><rect x="1003" y="618" width="3" height="20" fill="#ee8034"/><rect x="1008" y="618" width="3" height="20" fill="#ee8034"/><rect x="1013" y="618" width="3" height="20" fill="#ee8034"/><rect x="1018" y="618" width="3" height="20" fill="#ee8034"/><rect x="1023" y="618" width="3" height="20" fill="#ee8034"/><rect x="1028" y="618" width="3" height="20" fill="#ee8034"/><rect x="1033" y="618" width="3" height="20" fill="#ee8034"/><rect x="1038" y="618" width="3" height="20" fill="#ee8034"/><rect x="1043" y="618" width="3" height="20" fill="#ee8034"/><rect x="1048" y="618" width="3" height="20" fill="#ee8034"/><rect x="1053" y="618" width="3" height="20" fill="#ee8034"/><rect x="1058" y="618" width="3" height="20" fill="#ee8034"/><rect x="1063" y="618" width="3" height="20" fill="#ee8034"/><rect x="1068" y="618" width="3" height="20" fill="#ee8034"/><rect x="1073" y="618" width="3" height="20" fill="#ee8034"/><rect x="1078" y="618" width="3" height="20" fill="#ee8034"/><rect x="1083" y="618" width="3" height="20" fill="#ee8034"/><rect x="1088" y="618" width="3" height="20" fill="#ee8034"/><rect x="1093" y="618" width="3" height="20" fill="#ee8034"/><rect x="1098" y="618" width="3" height="20" fill="#ee8034"/><rect x="1103" y="618" width="3" height="20" fill="#ee8034"/><rect x="1108" y="618" width="3" height="20" fill="#583b29"/><rect x="1113" y="618" width="3" height="20" fill="#583b29"/><rect x="1118" y="618" width="3" height="20" fill="#583b29"/><rect x="1123" y="618" width="3" height="20" fill="#583b29"/><rect x="1128" y="618" width="3" height="20" fill="#583b29"/><rect x="1133" y="618" width="3" height="20" fill="#583b29"/><rect x="1138" y="618" width="3" height="20" fill="#583b29"/><rect x="1143" y="618" width="3" height="20" fill="#583b29"/><rect x="1148" y="618" width="3" height="20" fill="#583b29"/><rect x="1153" y="618" width="3" height="20" fill="#583b29"/><rect x="1158" y="618" width="3" height="20" fill="#583b29"/><rect x="1163" y="618" width="3" height="20" fill="#583b29"/><rect x="1168" y="618" width="3" height="20" fill="#583b29"/><rect x="1173" y="618" width="3" height="20" fill="#583b29"/><rect x="1178" y="618" width="3" height="20" fill="#583b29"/><rect x="1183" y="618" width="3" height="20" fill="#583b29"/><rect x="1188" y="618" width="3" height="20" fill="#583b29"/><rect x="1193" y="618" width="3" height="20" fill="#583b29"/><rect x="1198" y="618" width="3" height="20" fill="#583b29"/><rect x="1203" y="618" width="3" height="20" fill="#583b29"/><rect x="1208" y="618" width="3" height="20" fill="#583b29"/><rect x="1213" y="618" width="3" height="20" fill="#583b29"/><rect x="1218" y="618" width="3" height="20" fill="#583b29"/><rect x="1223" y="618" width="3" height="20" fill="#583b29"/><rect x="1228" y="618" width="3" height="20" fill="#583b29"/><rect x="1233" y="618" width="3" height="20" fill="#583b29"/><rect x="1238" y="618" width="3" height="20" fill="#583b29"/><rect x="1243" y="618" width="3" height="20" fill="#583b29"/><rect x="1248" y="618" width="3" height="20" fill="#583b29"/><rect x="1253" y="618" width="3" height="20" fill="#583b29"/><rect x="1258" y="618" width="3" height="20" fill="#583b29"/><rect x="1263" y="618" width="3" height="20" fill="#583b29"/><rect x="1268" y="618" width="3" height="20" fill="#583b29"/><rect x="1273" y="618" width="3" height="20" fill="#583b29"/><rect x="1278" y="618" width="3" height="20" fill="#583b29"/><rect x="1283" y="618" width="3" height="20" fill="#583b29"/><rect x="1288" y="618" width="3" height="20" fill="#583b29"/><rect x="1293" y="618" width="3" height="20" fill="#583b29"/><rect x="1298" y="618" width="3" height="20" fill="#583b29"/><rect x="1303" y="618" width="3" height="20" fill="#583b29"/><rect x="1308" y="618" width="3" height="20" fill="#583b29"/><rect x="1313" y="618" width="3" height="20" fill="#583b29"/><rect x="1318" y="618" width="3" height="20" fill="#583b29"/><rect x="1323" y="618" width="3" height="20" fill="#583b29"/><rect x="1328" y="618" width="3" height="20" fill="#583b29"/><rect x="1333" y="618" width="3" height="20" fill="#583b29"/><rect x="1338" y="618" width="3" height="20" fill="#583b29"/><rect x="1343" y="618" width="3" height="20" fill="#583b29"/><rect x="1348" y="618" width="3" height="20" fill="#583b29"/><rect x="1353" y="618" width="3" height="20" fill="#583b29"/><rect x="1358" y="618" width="3" height="20" fill="#583b29"/><rect x="962" y="642" width="41" height="22" fill="#0c1a26"/><rect x="963" y="643" width="3" height="20" fill="#ee8034"/><rect x="968" y="643" width="3" height="20" fill="#ee8034"/><rect x="973" y="643" width="3" height="20" fill="#ee8034"/><rect x="978" y="643" width="3" height="20" fill="#ee8034"/><rect x="983" y="643" width="3" height="20" fill="#ee8034"/><rect x="988" y="643" width="3" height="20" fill="#ee8034"/><rect x="993" y="643" width="3" height="20" fill="#ee8034"/><rect x="998" y="643" width="3" height="20" fill="#ee8034"/><rect x="1003" y="643" width="3" height="20" fill="#583b29"/><rect x="1008" y="643" width="3" height="20" fill="#583b29"/><rect x="1013" y="643" width="3" height="20" fill="#583b29"/><rect x="1018" y="643" width="3" height="20" fill="#583b29"/><rect x="1023" y="643" width="3" height="20" fill="#583b29"/><rect x="1028" y="643" width="3" height="20" fill="#583b29"/><rect x="1033" y="643" width="3" height="20" fill="#583b29"/><rect x="1038" y="643" width="3" height="20" fill="#583b29"/><rect x="1043" y="643" width="3" height="20" fill="#583b29"/><rect x="1048" y="643" width="3" height="20" fill="#583b29"/><rect x="1053" y="643" width="3" height="20" fill="#583b29"/><rect x="1058" y="643" width="3" height="20" fill="#583b29"/><rect x="1063" y="643" width="3" height="20" fill="#583b29"/><rect x="1068" y="643" width="3" height="20" fill="#583b29"/><rect x="1073" y="643" width="3" height="20" fill="#583b29"/><rect x="1078" y="643" width="3" height="20" fill="#583b29"/><rect x="1083" y="643" width="3" height="20" fill="#583b29"/><rect x="1088" y="643" width="3" height="20" fill="#583b29"/><rect x="1093" y="643" width="3" height="20" fill="#583b29"/><rect x="1098" y="643" width="3" height="20" fill="#583b29"/><rect x="1103" y="643" width="3" height="20" fill="#583b29"/><rect x="1108" y="643" width="3" height="20" fill="#583b29"/><rect x="1113" y="643" width="3" height="20" fill="#583b29"/><rect x="1118" y="643" width="3" height="20" fill="#583b29"/><rect x="1123" y="643" width="3" height="20" fill="#583b29"/><rect x="1128" y="643" width="3" height="20" fill="#583b29"/><rect x="1133" y="643" width="3" height="20" fill="#583b29"/><rect x="1138" y="643" width="3" height="20" fill="#583b29"/><rect x="1143" y="643" width="3" height="20" fill="#583b29"/><rect x="1148" y="643" width="3" height="20" fill="#583b29"/><rect x="1153" y="643" width="3" height="20" fill="#583b29"/><rect x="1158" y="643" width="3" height="20" fill="#583b29"/><rect x="1163" y="643" width="3" height="20" fill="#583b29"/><rect x="1168" y="643" width="3" height="20" fill="#583b29"/><rect x="1173" y="643" width="3" height="20" fill="#583b29"/><rect x="1178" y="643" width="3" height="20" fill="#583b29"/><rect x="1183" y="643" width="3" height="20" fill="#583b29"/><rect x="1188" y="643" width="3" height="20" fill="#583b29"/><rect x="1193" y="643" width="3" height="20" fill="#583b29"/><rect x="1198" y="643" width="3" height="20" fill="#583b29"/><rect x="1203" y="643" width="3" height="20" fill="#583b29"/><rect x="1208" y="643" width="3" height="20" fill="#583b29"/><rect x="1213" y="643" width="3" height="20" fill="#583b29"/><rect x="1218" y="643" width="3" height="20" fill="#583b29"/><rect x="1223" y="643" width="3" height="20" fill="#583b29"/><rect x="1228" y="643" width="3" height="20" fill="#583b29"/><rect x="1233" y="643" width="3" height="20" fill="#583b29"/><rect x="1238" y="643" width="3" height="20" fill="#583b29"/><rect x="1243" y="643" width="3" height="20" fill="#583b29"/><rect x="1248" y="643" width="3" height="20" fill="#583b29"/><rect x="1253" y="643" width="3" height="20" fill="#583b29"/><rect x="1258" y="643" width="3" height="20" fill="#583b29"/><rect x="1263" y="643" width="3" height="20" fill="#583b29"/><rect x="1268" y="643" width="3" height="20" fill="#583b29"/><rect x="1273" y="643" width="3" height="20" fill="#583b29"/><rect x="1278" y="643" width="3" height="20" fill="#583b29"/><rect x="1283" y="643" width="3" height="20" fill="#583b29"/><rect x="1288" y="643" width="3" height="20" fill="#583b29"/><rect x="1293" y="643" width="3" height="20" fill="#583b29"/><rect x="1298" y="643" width="3" height="20" fill="#583b29"/><rect x="1303" y="643" width="3" height="20" fill="#583b29"/><rect x="1308" y="643" width="3" height="20" fill="#583b29"/><rect x="1313" y="643" width="3" height="20" fill="#583b29"/><rect x="1318" y="643" width="3" height="20" fill="#583b29"/><rect x="1323" y="643" width="3" height="20" fill="#583b29"/><rect x="1328" y="643" width="3" height="20" fill="#583b29"/><rect x="1333" y="643" width="3" height="20" fill="#583b29"/><rect x="1338" y="643" width="3" height="20" fill="#583b29"/><rect x="1343" y="643" width="3" height="20" fill="#583b29"/><rect x="1348" y="643" width="3" height="20" fill="#583b29"/><rect x="1353" y="643" width="3" height="20" fill="#583b29"/><rect x="1358" y="643" width="3" height="20" fill="#583b29"/><rect x="962" y="667" width="186" height="22" fill="#0c1a26"/><rect x="963" y="668" width="3" height="20" fill="#ee8034"/><rect x="968" y="668" width="3" height="20" fill="#ee8034"/><rect x="973" y="668" width="3" height="20" fill="#ee8034"/><rect x="978" y="668" width="3" height="20" fill="#ee8034"/><rect x="983" y="668" width="3" height="20" fill="#ee8034"/><rect x="988" y="668" width="3" height="20" fill="#ee8034"/><rect x="993" y="668" width="3" height="20" fill="#ee8034"/><rect x="998" y="668" width="3" height="20" fill="#ee8034"/><rect x="1003" y="668" width="3" height="20" fill="#ee8034"/><rect x="1008" y="668" width="3" height="20" fill="#ee8034"/><rect x="1013" y="668" width="3" height="20" fill="#ee8034"/><rect x="1018" y="668" width="3" height="20" fill="#ee8034"/><rect x="1023" y="668" width="3" height="20" fill="#ee8034"/><rect x="1028" y="668" width="3" height="20" fill="#ee8034"/><rect x="1033" y="668" width="3" height="20" fill="#ee8034"/><rect x="1038" y="668" width="3" height="20" fill="#ee8034"/><rect x="1043" y="668" width="3" height="20" fill="#ee8034"/><rect x="1048" y="668" width="3" height="20" fill="#ee8034"/><rect x="1053" y="668" width="3" height="20" fill="#ee8034"/><rect x="1058" y="668" width="3" height="20" fill="#ee8034"/><rect x="1063" y="668" width="3" height="20" fill="#ee8034"/><rect x="1068" y="668" width="3" height="20" fill="#ee8034"/><rect x="1073" y="668" width="3" height="20" fill="#ee8034"/><rect x="1078" y="668" width="3" height="20" fill="#ee8034"/><rect x="1083" y="668" width="3" height="20" fill="#ee8034"/><rect x="1088" y="668" width="3" height="20" fill="#ee8034"/><rect x="1093" y="668" width="3" height="20" fill="#ee8034"/><rect x="1098" y="668" width="3" height="20" fill="#ee8034"/><rect x="1103" y="668" width="3" height="20" fill="#ee8034"/><rect x="1108" y="668" width="3" height="20" fill="#ee8034"/><rect x="1113" y="668" width="3" height="20" fill="#ee8034"/><rect x="1118" y="668" width="3" height="20" fill="#ee8034"/><rect x="1123" y="668" width="3" height="20" fill="#ee8034"/><rect x="1128" y="668" width="3" height="20" fill="#ee8034"/><rect x="1133" y="668" width="3" height="20" fill="#ee8034"/><rect x="1138" y="668" width="3" height="20" fill="#ee8034"/><rect x="1143" y="668" width="3" height="20" fill="#ee8034"/><rect x="1148" y="668" width="3" height="20" fill="#583b29"/><rect x="1153" y="668" width="3" height="20" fill="#583b29"/><rect x="1158" y="668" width="3" height="20" fill="#583b29"/><rect x="1163" y="668" width="3" height="20" fill="#583b29"/><rect x="1168" y="668" width="3" height="20" fill="#583b29"/><rect x="1173" y="668" width="3" height="20" fill="#583b29"/><rect x="1178" y="668" width="3" height="20" fill="#583b29"/><rect x="1183" y="668" width="3" height="20" fill="#583b29"/><rect x="1188" y="668" width="3" height="20" fill="#583b29"/><rect x="1193" y="668" width="3" height="20" fill="#583b29"/><rect x="1198" y="668" width="3" height="20" fill="#583b29"/><rect x="1203" y="668" width="3" height="20" fill="#583b29"/><rect x="1208" y="668" width="3" height="20" fill="#583b29"/><rect x="1213" y="668" width="3" height="20" fill="#583b29"/><rect x="1218" y="668" width="3" height="20" fill="#583b29"/><rect x="1223" y="668" width="3" height="20" fill="#583b29"/><rect x="1228" y="668" width="3" height="20" fill="#583b29"/><rect x="1233" y="668" width="3" height="20" fill="#583b29"/><rect x="1238" y="668" width="3" height="20" fill="#583b29"/><rect x="1243" y="668" width="3" height="20" fill="#583b29"/><rect x="1248" y="668" width="3" height="20" fill="#583b29"/><rect x="1253" y="668" width="3" height="20" fill="#583b29"/><rect x="1258" y="668" width="3" height="20" fill="#583b29"/><rect x="1263" y="668" width="3" height="20" fill="#583b29"/><rect x="1268" y="668" width="3" height="20" fill="#583b29"/><rect x="1273" y="668" width="3" height="20" fill="#583b29"/><rect x="1278" y="668" width="3" height="20" fill="#583b29"/><rect x="1283" y="668" width="3" height="20" fill="#583b29"/><rect x="1288" y="668" width="3" height="20" fill="#583b29"/><rect x="1293" y="668" width="3" height="20" fill="#583b29"/><rect x="1298" y="668" width="3" height="20" fill="#583b29"/><rect x="1303" y="668" width="3" height="20" fill="#583b29"/><rect x="1308" y="668" width="3" height="20" fill="#583b29"/><rect x="1313" y="668" width="3" height="20" fill="#583b29"/><rect x="1318" y="668" width="3" height="20" fill="#583b29"/><rect x="1323" y="668" width="3" height="20" fill="#583b29"/><rect x="1328" y="668" width="3" height="20" fill="#583b29"/><rect x="1333" y="668" width="3" height="20" fill="#583b29"/><rect x="1338" y="668" width="3" height="20" fill="#583b29"/><rect x="1343" y="668" width="3" height="20" fill="#583b29"/><rect x="1348" y="668" width="3" height="20" fill="#583b29"/><rect x="1353" y="668" width="3" height="20" fill="#583b29"/><rect x="1358" y="668" width="3" height="20" fill="#583b29"/><rect x="962" y="692" width="41" height="22" fill="#0c1a26"/><rect x="963" y="693" width="3" height="20" fill="#ee8034"/><rect x="968" y="693" width="3" height="20" fill="#ee8034"/><rect x="973" y="693" width="3" height="20" fill="#ee8034"/><rect x="978" y="693" width="3" height="20" fill="#ee8034"/><rect x="983" y="693" width="3" height="20" fill="#ee8034"/><rect x="988" y="693" width="3" height="20" fill="#ee8034"/><rect x="993" y="693" width="3" height="20" fill="#ee8034"/><rect x="998" y="693" width="3" height="20" fill="#ee8034"/><rect x="1003" y="693" width="3" height="20" fill="#583b29"/><rect x="1008" y="693" width="3" height="20" fill="#583b29"/><rect x="1013" y="693" width="3" height="20" fill="#583b29"/><rect x="1018" y="693" width="3" height="20" fill="#583b29"/><rect x="1023" y="693" width="3" height="20" fill="#583b29"/><rect x="1028" y="693" width="3" height="20" fill="#583b29"/><rect x="1033" y="693" width="3" height="20" fill="#583b29"/><rect x="1038" y="693" width="3" height="20" fill="#583b29"/><rect x="1043" y="693" width="3" height="20" fill="#583b29"/><rect x="1048" y="693" width="3" height="20" fill="#583b29"/><rect x="1053" y="693" width="3" height="20" fill="#583b29"/><rect x="1058" y="693" width="3" height="20" fill="#583b29"/><rect x="1063" y="693" width="3" height="20" fill="#583b29"/><rect x="1068" y="693" width="3" height="20" fill="#583b29"/><rect x="1073" y="693" width="3" height="20" fill="#583b29"/><rect x="1078" y="693" width="3" height="20" fill="#583b29"/><rect x="1083" y="693" width="3" height="20" fill="#583b29"/><rect x="1088" y="693" width="3" height="20" fill="#583b29"/><rect x="1093" y="693" width="3" height="20" fill="#583b29"/><rect x="1098" y="693" width="3" height="20" fill="#583b29"/><rect x="1103" y="693" width="3" height="20" fill="#583b29"/><rect x="1108" y="693" width="3" height="20" fill="#583b29"/><rect x="1113" y="693" width="3" height="20" fill="#583b29"/><rect x="1118" y="693" width="3" height="20" fill="#583b29"/><rect x="1123" y="693" width="3" height="20" fill="#583b29"/><rect x="1128" y="693" width="3" height="20" fill="#583b29"/><rect x="1133" y="693" width="3" height="20" fill="#583b29"/><rect x="1138" y="693" width="3" height="20" fill="#583b29"/><rect x="1143" y="693" width="3" height="20" fill="#583b29"/><rect x="1148" y="693" width="3" height="20" fill="#583b29"/><rect x="1153" y="693" width="3" height="20" fill="#583b29"/><rect x="1158" y="693" width="3" height="20" fill="#583b29"/><rect x="1163" y="693" width="3" height="20" fill="#583b29"/><rect x="1168" y="693" width="3" height="20" fill="#583b29"/><rect x="1173" y="693" width="3" height="20" fill="#583b29"/><rect x="1178" y="693" width="3" height="20" fill="#583b29"/><rect x="1183" y="693" width="3" height="20" fill="#583b29"/><rect x="1188" y="693" width="3" height="20" fill="#583b29"/><rect x="1193" y="693" width="3" height="20" fill="#583b29"/><rect x="1198" y="693" width="3" height="20" fill="#583b29"/><rect x="1203" y="693" width="3" height="20" fill="#583b29"/><rect x="1208" y="693" width="3" height="20" fill="#583b29"/><rect x="1213" y="693" width="3" height="20" fill="#583b29"/><rect x="1218" y="693" width="3" height="20" fill="#583b29"/><rect x="1223" y="693" width="3" height="20" fill="#583b29"/><rect x="1228" y="693" width="3" height="20" fill="#583b29"/><rect x="1233" y="693" width="3" height="20" fill="#583b29"/><rect x="1238" y="693" width="3" height="20" fill="#583b29"/><rect x="1243" y="693" width="3" height="20" fill="#583b29"/><rect x="1248" y="693" width="3" height="20" fill="#583b29"/><rect x="1253" y="693" width="3" height="20" fill="#583b29"/><rect x="1258" y="693" width="3" height="20" fill="#583b29"/><rect x="1263" y="693" width="3" height="20" fill="#583b29"/><rect x="1268" y="693" width="3" height="20" fill="#583b29"/><rect x="1273" y="693" width="3" height="20" fill="#583b29"/><rect x="1278" y="693" width="3" height="20" fill="#583b29"/><rect x="1283" y="693" width="3" height="20" fill="#583b29"/><rect x="1288" y="693" width="3" height="20" fill="#583b29"/><rect x="1293" y="693" width="3" height="20" fill="#583b29"/><rect x="1298" y="693" width="3" height="20" fill="#583b29"/><rect x="1303" y="693" width="3" height="20" fill="#583b29"/><rect x="1308" y="693" width="3" height="20" fill="#583b29"/><rect x="1313" y="693" width="3" height="20" fill="#583b29"/><rect x="1318" y="693" width="3" height="20" fill="#583b29"/><rect x="1323" y="693" width="3" height="20" fill="#583b29"/><rect x="1328" y="693" width="3" height="20" fill="#583b29"/><rect x="1333" y="693" width="3" height="20" fill="#583b29"/><rect x="1338" y="693" width="3" height="20" fill="#583b29"/><rect x="1343" y="693" width="3" height="20" fill="#583b29"/><rect x="1348" y="693" width="3" height="20" fill="#583b29"/><rect x="1353" y="693" width="3" height="20" fill="#583b29"/><rect x="1358" y="693" width="3" height="20" fill="#583b29"/><rect x="962" y="717" width="146" height="22" fill="#0c1a26"/><rect x="963" y="718" width="3" height="20" fill="#ee8034"/><rect x="968" y="718" width="3" height="20" fill="#ee8034"/><rect x="973" y="718" width="3" height="20" fill="#ee8034"/><rect x="978" y="718" width="3" height="20" fill="#ee8034"/><rect x="983" y="718" width="3" height="20" fill="#ee8034"/><rect x="988" y="718" width="3" height="20" fill="#ee8034"/><rect x="993" y="718" width="3" height="20" fill="#ee8034"/><rect x="998" y="718" width="3" height="20" fill="#ee8034"/><rect x="1003" y="718" width="3" height="20" fill="#ee8034"/><rect x="1008" y="718" width="3" height="20" fill="#ee8034"/><rect x="1013" y="718" width="3" height="20" fill="#ee8034"/><rect x="1018" y="718" width="3" height="20" fill="#ee8034"/><rect x="1023" y="718" width="3" height="20" fill="#ee8034"/><rect x="1028" y="718" width="3" height="20" fill="#ee8034"/><rect x="1033" y="718" width="3" height="20" fill="#ee8034"/><rect x="1038" y="718" width="3" height="20" fill="#ee8034"/><rect x="1043" y="718" width="3" height="20" fill="#ee8034"/><rect x="1048" y="718" width="3" height="20" fill="#ee8034"/><rect x="1053" y="718" width="3" height="20" fill="#ee8034"/><rect x="1058" y="718" width="3" height="20" fill="#ee8034"/><rect x="1063" y="718" width="3" height="20" fill="#ee8034"/><rect x="1068" y="718" width="3" height="20" fill="#ee8034"/><rect x="1073" y="718" width="3" height="20" fill="#ee8034"/><rect x="1078" y="718" width="3" height="20" fill="#ee8034"/><rect x="1083" y="718" width="3" height="20" fill="#ee8034"/><rect x="1088" y="718" width="3" height="20" fill="#ee8034"/><rect x="1093" y="718" width="3" height="20" fill="#ee8034"/><rect x="1098" y="718" width="3" height="20" fill="#ee8034"/><rect x="1103" y="718" width="3" height="20" fill="#ee8034"/><rect x="1108" y="718" width="3" height="20" fill="#583b29"/><rect x="1113" y="718" width="3" height="20" fill="#583b29"/><rect x="1118" y="718" width="3" height="20" fill="#583b29"/><rect x="1123" y="718" width="3" height="20" fill="#583b29"/><rect x="1128" y="718" width="3" height="20" fill="#583b29"/><rect x="1133" y="718" width="3" height="20" fill="#583b29"/><rect x="1138" y="718" width="3" height="20" fill="#583b29"/><rect x="1143" y="718" width="3" height="20" fill="#583b29"/><rect x="1148" y="718" width="3" height="20" fill="#583b29"/><rect x="1153" y="718" width="3" height="20" fill="#583b29"/><rect x="1158" y="718" width="3" height="20" fill="#583b29"/><rect x="1163" y="718" width="3" height="20" fill="#583b29"/><rect x="1168" y="718" width="3" height="20" fill="#583b29"/><rect x="1173" y="718" width="3" height="20" fill="#583b29"/><rect x="1178" y="718" width="3" height="20" fill="#583b29"/><rect x="1183" y="718" width="3" height="20" fill="#583b29"/><rect x="1188" y="718" width="3" height="20" fill="#583b29"/><rect x="1193" y="718" width="3" height="20" fill="#583b29"/><rect x="1198" y="718" width="3" height="20" fill="#583b29"/><rect x="1203" y="718" width="3" height="20" fill="#583b29"/><rect x="1208" y="718" width="3" height="20" fill="#583b29"/><rect x="1213" y="718" width="3" height="20" fill="#583b29"/><rect x="1218" y="718" width="3" height="20" fill="#583b29"/><rect x="1223" y="718" width="3" height="20" fill="#583b29"/><rect x="1228" y="718" width="3" height="20" fill="#583b29"/><rect x="1233" y="718" width="3" height="20" fill="#583b29"/><rect x="1238" y="718" width="3" height="20" fill="#583b29"/><rect x="1243" y="718" width="3" height="20" fill="#583b29"/><rect x="1248" y="718" width="3" height="20" fill="#583b29"/><rect x="1253" y="718" width="3" height="20" fill="#583b29"/><rect x="1258" y="718" width="3" height="20" fill="#583b29"/><rect x="1263" y="718" width="3" height="20" fill="#583b29"/><rect x="1268" y="718" width="3" height="20" fill="#583b29"/><rect x="1273" y="718" width="3" height="20" fill="#583b29"/><rect x="1278" y="718" width="3" height="20" fill="#583b29"/><rect x="1283" y="718" width="3" height="20" fill="#583b29"/><rect x="1288" y="718" width="3" height="20" fill="#583b29"/><rect x="1293" y="718" width="3" height="20" fill="#583b29"/><rect x="1298" y="718" width="3" height="20" fill="#583b29"/><rect x="1303" y="718" width="3" height="20" fill="#583b29"/><rect x="1308" y="718" width="3" height="20" fill="#583b29"/><rect x="1313" y="718" width="3" height="20" fill="#583b29"/><rect x="1318" y="718" width="3" height="20" fill="#583b29"/><rect x="1323" y="718" width="3" height="20" fill="#583b29"/><rect x="1328" y="718" width="3" height="20" fill="#583b29"/><rect x="1333" y="718" width="3" height="20" fill="#583b29"/><rect x="1338" y="718" width="3" height="20" fill="#583b29"/><rect x="1343" y="718" width="3" height="20" fill="#583b29"/><rect x="1348" y="718" width="3" height="20" fill="#583b29"/><rect x="1353" y="718" width="3" height="20" fill="#583b29"/><rect x="1358" y="718" width="3" height="20" fill="#583b29"/><rect x="962" y="742" width="156" height="22" fill="#0c1a26"/><rect x="963" y="743" width="3" height="20" fill="#ee8034"/><rect x="968" y="743" width="3" height="20" fill="#ee8034"/><rect x="973" y="743" width="3" height="20" fill="#ee8034"/><rect x="978" y="743" width="3" height="20" fill="#ee8034"/><rect x="983" y="743" width="3" height="20" fill="#ee8034"/><rect x="988" y="743" width="3" height="20" fill="#ee8034"/><rect x="993" y="743" width="3" height="20" fill="#ee8034"/><rect x="998" y="743" width="3" height="20" fill="#ee8034"/><rect x="1003" y="743" width="3" height="20" fill="#ee8034"/><rect x="1008" y="743" width="3" height="20" fill="#ee8034"/><rect x="1013" y="743" width="3" height="20" fill="#ee8034"/><rect x="1018" y="743" width="3" height="20" fill="#ee8034"/><rect x="1023" y="743" width="3" height="20" fill="#ee8034"/><rect x="1028" y="743" width="3" height="20" fill="#ee8034"/><rect x="1033" y="743" width="3" height="20" fill="#ee8034"/><rect x="1038" y="743" width="3" height="20" fill="#ee8034"/><rect x="1043" y="743" width="3" height="20" fill="#ee8034"/><rect x="1048" y="743" width="3" height="20" fill="#ee8034"/><rect x="1053" y="743" width="3" height="20" fill="#ee8034"/><rect x="1058" y="743" width="3" height="20" fill="#ee8034"/><rect x="1063" y="743" width="3" height="20" fill="#ee8034"/><rect x="1068" y="743" width="3" height="20" fill="#ee8034"/><rect x="1073" y="743" width="3" height="20" fill="#ee8034"/><rect x="1078" y="743" width="3" height="20" fill="#ee8034"/><rect x="1083" y="743" width="3" height="20" fill="#ee8034"/><rect x="1088" y="743" width="3" height="20" fill="#ee8034"/><rect x="1093" y="743" width="3" height="20" fill="#ee8034"/><rect x="1098" y="743" width="3" height="20" fill="#ee8034"/><rect x="1103" y="743" width="3" height="20" fill="#ee8034"/><rect x="1108" y="743" width="3" height="20" fill="#ee8034"/><rect x="1113" y="743" width="3" height="20" fill="#ee8034"/><rect x="1118" y="743" width="3" height="20" fill="#583b29"/><rect x="1123" y="743" width="3" height="20" fill="#583b29"/><rect x="1128" y="743" width="3" height="20" fill="#583b29"/><rect x="1133" y="743" width="3" height="20" fill="#583b29"/><rect x="1138" y="743" width="3" height="20" fill="#583b29"/><rect x="1143" y="743" width="3" height="20" fill="#583b29"/><rect x="1148" y="743" width="3" height="20" fill="#583b29"/><rect x="1153" y="743" width="3" height="20" fill="#583b29"/><rect x="1158" y="743" width="3" height="20" fill="#583b29"/><rect x="1163" y="743" width="3" height="20" fill="#583b29"/><rect x="1168" y="743" width="3" height="20" fill="#583b29"/><rect x="1173" y="743" width="3" height="20" fill="#583b29"/><rect x="1178" y="743" width="3" height="20" fill="#583b29"/><rect x="1183" y="743" width="3" height="20" fill="#583b29"/><rect x="1188" y="743" width="3" height="20" fill="#583b29"/><rect x="1193" y="743" width="3" height="20" fill="#583b29"/><rect x="1198" y="743" width="3" height="20" fill="#583b29"/><rect x="1203" y="743" width="3" height="20" fill="#583b29"/><rect x="1208" y="743" width="3" height="20" fill="#583b29"/><rect x="1213" y="743" width="3" height="20" fill="#583b29"/><rect x="1218" y="743" width="3" height="20" fill="#583b29"/><rect x="1223" y="743" width="3" height="20" fill="#583b29"/><rect x="1228" y="743" width="3" height="20" fill="#583b29"/><rect x="1233" y="743" width="3" height="20" fill="#583b29"/><rect x="1238" y="743" width="3" height="20" fill="#583b29"/><rect x="1243" y="743" width="3" height="20" fill="#583b29"/><rect x="1248" y="743" width="3" height="20" fill="#583b29"/><rect x="1253" y="743" width="3" height="20" fill="#583b29"/><rect x="1258" y="743" width="3" height="20" fill="#583b29"/><rect x="1263" y="743" width="3" height="20" fill="#583b29"/><rect x="1268" y="743" width="3" height="20" fill="#583b29"/><rect x="1273" y="743" width="3" height="20" fill="#583b29"/><rect x="1278" y="743" width="3" height="20" fill="#583b29"/><rect x="1283" y="743" width="3" height="20" fill="#583b29"/><rect x="1288" y="743" width="3" height="20" fill="#583b29"/><rect x="1293" y="743" width="3" height="20" fill="#583b29"/><rect x="1298" y="743" width="3" height="20" fill="#583b29"/><rect x="1303" y="743" width="3" height="20" fill="#583b29"/><rect x="1308" y="743" width="3" height="20" fill="#583b29"/><rect x="1313" y="743" width="3" height="20" fill="#583b29"/><rect x="1318" y="743" width="3" height="20" fill="#583b29"/><rect x="1323" y="743" width="3" height="20" fill="#583b29"/><rect x="1328" y="743" width="3" height="20" fill="#583b29"/><rect x="1333" y="743" width="3" height="20" fill="#583b29"/><rect x="1338" y="743" width="3" height="20" fill="#583b29"/><rect x="1343" y="743" width="3" height="20" fill="#583b29"/><rect x="1348" y="743" width="3" height="20" fill="#583b29"/><rect x="1353" y="743" width="3" height="20" fill="#583b29"/><rect x="1358" y="743" width="3" height="20" fill="#583b29"/></svg>
<div class="t" style="left:1063.20px;width:200px;text-align:center;top:585.34px;font-size:18.5px;line-height:18.5px;color:#e2e2e2;">Balance</div>
<div class="a" style="left:823px;top:618px;width:100px;height:20px;background:#1c2d3e;"></div>
<div class="t" style="left:823.00px;width:100px;text-align:center;top:621.88px;font-size:15.5px;line-height:15.5px;color:#dcdcdc;">7,4 A</div>
<div class="a" style="left:823px;top:643px;width:100px;height:20px;background:#1c2d3e;"></div>
<div class="t" style="left:823.00px;width:100px;text-align:center;top:646.88px;font-size:15.5px;line-height:15.5px;color:#dcdcdc;">6,2 A</div>
<div class="a" style="left:823px;top:668px;width:100px;height:20px;background:#1c2d3e;"></div>
<div class="t" style="left:823.00px;width:100px;text-align:center;top:671.88px;font-size:15.5px;line-height:15.5px;color:#dcdcdc;">7,2 A</div>
<div class="a" style="left:823px;top:693px;width:100px;height:20px;background:#1c2d3e;"></div>
<div class="t" style="left:823.00px;width:100px;text-align:center;top:696.88px;font-size:15.5px;line-height:15.5px;color:#dcdcdc;">7,7 A</div>
<div class="a" style="left:823px;top:718px;width:100px;height:20px;background:#1c2d3e;"></div>
<div class="t" style="left:823.00px;width:100px;text-align:center;top:721.88px;font-size:15.5px;line-height:15.5px;color:#dcdcdc;">7,2 A</div>
<div class="a" style="left:823px;top:743px;width:100px;height:20px;background:#1c2d3e;"></div>
<div class="t" style="left:823.00px;width:100px;text-align:center;top:746.88px;font-size:15.5px;line-height:15.5px;color:#dcdcdc;">7,3 A</div>
</body></html>
